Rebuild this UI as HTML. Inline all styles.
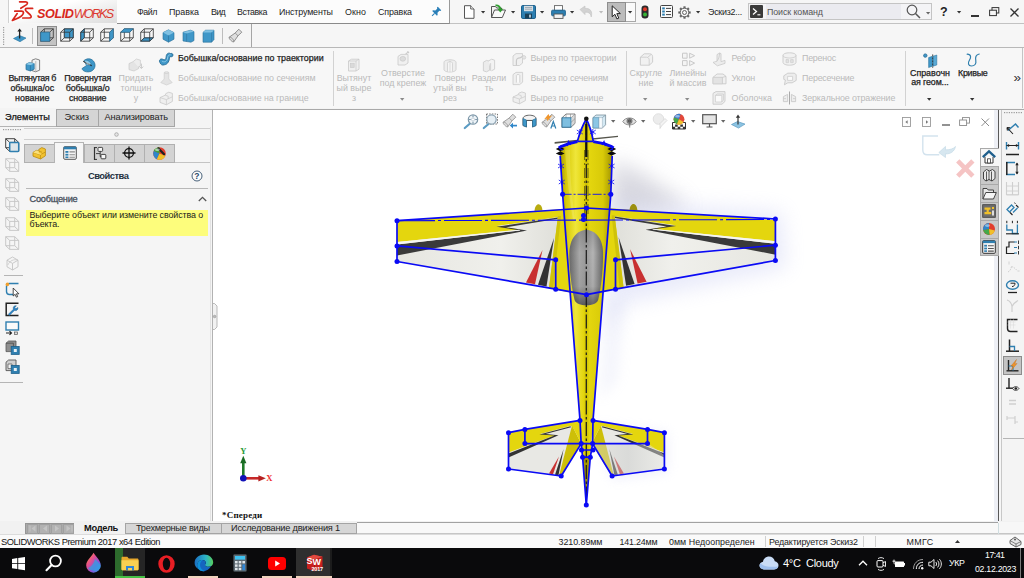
<!DOCTYPE html>
<html lang="ru">
<head>
<meta charset="utf-8">
<title>SOLIDWORKS</title>
<style>
html,body{margin:0;padding:0;}
body{width:1024px;height:578px;overflow:hidden;position:relative;background:#f4f4f4;font-family:"Liberation Sans","DejaVu Sans",sans-serif;font-size:9px;color:#1a1a1a;}
.abs{position:absolute;}
.t{position:absolute;white-space:nowrap;line-height:1;}
.c{position:absolute;text-align:center;line-height:10px;white-space:nowrap;}
.dis{color:#b9b9b9;}
svg{position:absolute;overflow:visible;}
/* title bar */
#titlebar{left:0;top:0;width:1024px;height:24px;background:#f6f6f6;}
#logo{left:8px;top:0;width:108px;height:23px;background:linear-gradient(165deg,#ffffff 35%,#dcdcdc);border-right:1px solid #bdbdbd;border-left:1px solid #d0d0d0;box-sizing:content-box;}
#menubar{left:117px;top:0;width:332px;height:23px;background:#fcfcfc;border-right:1px solid #9a9a9a;border-bottom:1px solid #8a8a8a;}
#row2{left:0;top:24px;width:1024px;height:24px;background:#f6f6f6;}
#tb2{left:0;top:24px;width:251px;height:23px;background:#f5f5f5;border-right:1.3px solid #a6a6a6;border-bottom:1px solid #b4b4b4;}
#cm{left:0;top:47px;width:1024px;height:61px;background:#f7f7f7;border-top:1px solid #b8b8b8;}
.vsep{position:absolute;width:1px;background:#d4d4d4;}
/* tabs */
#tabrow{left:0;top:108px;width:1024px;height:20px;background:#f4f4f4;}
.tab{position:absolute;top:109px;height:17px;line-height:17px;font-size:9.5px;text-align:center;background:#d6d6d6;border:1px solid #ababab;box-sizing:border-box;color:#222;}
/* left panel */
#left{left:0;top:127px;width:213px;height:394px;background:#f5f5f5;}
#leftbar{left:0;top:127px;width:24px;height:394px;background:#f5f5f5;}
#viewport{left:211.5px;top:110px;width:787.5px;height:412px;background:#fff;border-left:1.5px solid #b2b2b2;border-right:1px solid #5a5a5a;box-sizing:border-box;}
#right{left:999px;top:109px;width:25px;height:412px;background:#f3f3f3;}
#btabs{left:0;top:521px;width:1024px;height:13px;background:#f2f2f2;}
#status{left:0;top:534px;width:1024px;height:14px;background:#f4f4f4;border-top:1px solid #dcdcdc;box-sizing:border-box;}
#taskbar{left:0;top:548px;width:1024px;height:30px;background:#0a0a0c;}
</style>
</head>
<body>
<div id="titlebar" class="abs"></div>
<div id="logo" class="abs"></div>
<div id="menubar" class="abs"></div>
<div id="row2" class="abs"></div>
<div id="tb2" class="abs"></div>
<div id="cm" class="abs"></div>
<div id="tabrow" class="abs"></div>
<div id="left" class="abs"></div>
<div id="viewport" class="abs"></div>
<div id="right" class="abs"></div>
<div id="btabs" class="abs"></div>
<div id="status" class="abs"></div>
<div id="taskbar" class="abs"></div>
<svg style="left:0px;top:0px" width="36" height="23" viewBox="0 0 36 23"><g fill="none" stroke="#d8271d" stroke-width="1.7" stroke-linecap="round" stroke-linejoin="round">
<path d="M19.6 1.8 H25.6 C27.8 1.8 27.9 3.4 26.6 4.6 L20.8 8.3"/>
<path d="M14.8 11.2 H21.6 C24 11.2 24 13.2 22.4 15 C20.4 17.4 16.5 19 12.4 20.4 L17.2 13.6"/>
<path d="M32.6 8.4 H27.2 C25 8.4 24.8 9.8 26.2 11.2 L30.4 15 C31.8 16.4 31.4 18 29.2 18 H22.8"/>
</g></svg>
<div class="t " style="left:37px;top:7.04px;font-size:12.6px;line-height:15.12px;color:#d8271d;font-weight:bold;font-style:italic;letter-spacing:-0.400px;">SOLID</div>
<div class="t " style="left:73.8px;top:7.04px;font-size:12.6px;line-height:15.12px;color:#dc3a30;font-style:italic;letter-spacing:-1.820px;">WORKS</div>
<div class="t " style="left:137px;top:6.86px;font-size:8.9px;line-height:10.68px;color:#1d1d1d;letter-spacing:-0.470px;">Файл</div>
<div class="t " style="left:169px;top:6.86px;font-size:8.9px;line-height:10.68px;color:#1d1d1d;letter-spacing:-0.010px;">Правка</div>
<div class="t " style="left:211px;top:6.86px;font-size:8.9px;line-height:10.68px;color:#1d1d1d;letter-spacing:-0.700px;">Вид</div>
<div class="t " style="left:237px;top:6.86px;font-size:8.9px;line-height:10.68px;color:#1d1d1d;letter-spacing:-0.440px;">Вставка</div>
<div class="t " style="left:279px;top:6.86px;font-size:8.9px;line-height:10.68px;color:#1d1d1d;letter-spacing:-0.136px;">Инструменты</div>
<div class="t " style="left:345px;top:6.86px;font-size:8.9px;line-height:10.68px;color:#1d1d1d;letter-spacing:0.080px;">Окно</div>
<div class="t " style="left:378px;top:6.86px;font-size:8.9px;line-height:10.68px;color:#1d1d1d;letter-spacing:-0.130px;">Справка</div>
<svg style="left:430px;top:6px" width="12" height="12" viewBox="0 0 12 12"><g transform="rotate(45 6 6)"><path d="M3.6 1h4.8v1.2l-0.9 0.6v2.6l1.8 1.6v1H2.7v-1l1.8-1.6V2.8l-0.9-0.6z" fill="#2a7fb8"/><path d="M6 8v3.6" stroke="#2a7fb8" stroke-width="1"/></g></svg>
<svg style="left:463px;top:5px" width="13" height="14" viewBox="0 0 13 14"><path d="M1.5 0.7h6.2l3.3 3.3v9.3H1.5z" fill="#fff" stroke="#555" stroke-width="1"/><path d="M7.7 0.7v3.3h3.3" fill="#eee" stroke="#555" stroke-width="0.9"/></svg>
<svg style="left:481.4px;top:10.9px" width="4.2" height="2.6" viewBox="0 0 4.2 2.6"><path d="M0 0h4.200L2.100 2.600z" fill="#333"/></svg>
<svg style="left:490px;top:4px" width="17" height="15" viewBox="0 0 17 15"><path d="M1.5 13.5V2.5h4l1.2 1.5h4.8v2" fill="#f4f4f4" stroke="#555" stroke-width="1"/><path d="M1.5 13.5l3-7.5h11l-3.2 7.5z" fill="#fafafa" stroke="#555" stroke-width="1"/><path d="M5.500 1.400c3.200-0.200 4.800 1.400 4.800 4" fill="none" stroke="#2f9e2f" stroke-width="1.900"/><path d="M7.300 4.800h6l-3 3.800z" fill="#2f9e2f"/></svg>
<svg style="left:510.9px;top:10.9px" width="4.2" height="2.6" viewBox="0 0 4.2 2.6"><path d="M0 0h4.200L2.100 2.600z" fill="#333"/></svg>
<svg style="left:520.5px;top:4.5px" width="15" height="14" viewBox="0 0 15 14"><rect x="0.5" y="0.5" width="14" height="13" rx="1.3" fill="#2d7fb1" stroke="#1d5f8a"/><rect x="3" y="0.8" width="9" height="5.4" fill="#d5dde3"/><path d="M4 2.5h7M4 4.2h7" stroke="#8b99a3" stroke-width="0.7"/><rect x="4" y="8.6" width="7" height="4.9" fill="#1a3f57"/><rect x="8.2" y="9.6" width="1.6" height="3" fill="#cfe3ef"/></svg>
<svg style="left:539.9px;top:10.9px" width="4.2" height="2.6" viewBox="0 0 4.2 2.6"><path d="M0 0h4.200L2.100 2.600z" fill="#333"/></svg>
<svg style="left:550.5px;top:4.5px" width="15" height="14" viewBox="0 0 15 14"><rect x="3.5" y="0.6" width="8" height="5" fill="#fff" stroke="#666" stroke-width="0.9"/><rect x="0.6" y="5.2" width="13.8" height="5.6" rx="1" fill="#2d7fb1" stroke="#1d5f8a" stroke-width="0.9"/><rect x="3" y="9" width="9" height="4.4" fill="#f3f3f3" stroke="#555" stroke-width="0.9"/></svg>
<svg style="left:569.9px;top:10.9px" width="4.2" height="2.6" viewBox="0 0 4.2 2.6"><path d="M0 0h4.200L2.100 2.600z" fill="#333"/></svg>
<svg style="left:579px;top:5px" width="15" height="13" viewBox="0 0 15 13"><path d="M1 4.5L6 1v2.4c5-0.4 8 3 6.2 8.6c-0.4-3.6-2.6-5-6.2-4.8V9.6z" fill="#d2d2d2" stroke="#c2c2c2" stroke-width="0.6"/></svg>
<svg style="left:598.9px;top:10.9px" width="4.2" height="2.6" viewBox="0 0 4.2 2.6"><path d="M0 0h4.200L2.100 2.600z" fill="#bdbdbd"/></svg>
<div class="abs" style="left:606.5px;top:2px;width:19.5px;height:19.5px;background:#bcbcbc;border:1px solid #8e8e8e;box-sizing:border-box;"></div>
<div class="abs" style="left:625.5px;top:2px;width:10px;height:19.5px;background:#fafafa;border:1px solid #a8a8a8;box-sizing:border-box;border-left:none;"></div>
<svg style="left:611px;top:4.5px" width="11" height="15" viewBox="0 0 11 15"><path d="M1.2 0.8v11l2.7-2.5 2 4.6 1.9-0.8-2-4.5h3.6z" fill="#fff" stroke="#222" stroke-width="1" stroke-linejoin="round"/></svg>
<svg style="left:628.4px;top:10.9px" width="4.2" height="2.6" viewBox="0 0 4.2 2.6"><path d="M0 0h4.200L2.100 2.600z" fill="#333"/></svg>
<svg style="left:640.5px;top:4.5px" width="8" height="14" viewBox="0 0 8 14"><rect x="0.5" y="0.5" width="7" height="13" rx="3.2" fill="#2b2b2b"/><circle cx="4" cy="4.2" r="2" fill="#e23a2a"/><circle cx="4" cy="9.6" r="2" fill="#35b335"/></svg>
<svg style="left:659.5px;top:5px" width="13" height="13" viewBox="0 0 13 13"><rect x="0.5" y="0.5" width="12" height="12" rx="1" fill="#fbfbfb" stroke="#444"/><rect x="2.2" y="2.4" width="2.6" height="2" fill="#2d7fb1"/><rect x="2.2" y="5.5" width="2.6" height="2" fill="#2d7fb1"/><rect x="2.2" y="8.6" width="2.6" height="2" fill="#2d7fb1"/><path d="M6 3.4h5M6 6.5h5M6 9.6h5" stroke="#444" stroke-width="1"/></svg>
<svg style="left:677.5px;top:5.5px" width="13" height="13" viewBox="0 0 13 13"><g transform="translate(6.5 6.5)"><g fill="#666"><rect x="-1.1" y="-6.2" width="2.2" height="2.6" transform="rotate(0)"/><rect x="-1.1" y="-6.2" width="2.2" height="2.6" transform="rotate(45)"/><rect x="-1.1" y="-6.2" width="2.2" height="2.6" transform="rotate(90)"/><rect x="-1.1" y="-6.2" width="2.2" height="2.6" transform="rotate(135)"/><rect x="-1.1" y="-6.2" width="2.2" height="2.6" transform="rotate(180)"/><rect x="-1.1" y="-6.2" width="2.2" height="2.6" transform="rotate(225)"/><rect x="-1.1" y="-6.2" width="2.2" height="2.6" transform="rotate(270)"/><rect x="-1.1" y="-6.2" width="2.2" height="2.6" transform="rotate(315)"/></g><circle r="4.3" fill="#f8f8f8" stroke="#555" stroke-width="0.9"/><circle r="2" fill="#f8f8f8" stroke="#555" stroke-width="0.9"/></g></svg>
<svg style="left:695.9px;top:10.9px" width="4.2" height="2.6" viewBox="0 0 4.2 2.6"><path d="M0 0h4.200L2.100 2.600z" fill="#333"/></svg>
<div class="t " style="left:708px;top:6.96px;font-size:8.9px;line-height:10.68px;color:#1d1d1d;letter-spacing:-0.240px;">Эскиз2...</div>
<div class="abs" style="left:748px;top:3px;width:184px;height:17px;background:#f4f4f6;border:1px solid #c4c4c4;box-sizing:border-box;"></div>
<div class="abs" style="left:766px;top:4px;width:135px;height:15px;background:#ebebf0;"></div>
<svg style="left:750px;top:5px" width="13" height="13" viewBox="0 0 13 13"><rect width="13" height="13" rx="1" fill="#3a3a3a"/><path d="M3 3.5l3.5 3L3 9.5" fill="none" stroke="#fff" stroke-width="1.3"/><path d="M7.4 9.8h3" stroke="#fff" stroke-width="1.1"/></svg>
<div class="t " style="left:767px;top:6.96px;font-size:8.9px;line-height:10.68px;color:#555;letter-spacing:-0.104px;">Поиск команд</div>
<svg style="left:906px;top:4px" width="16" height="15" viewBox="0 0 16 15"><circle cx="6" cy="6" r="4.8" fill="none" stroke="#555" stroke-width="1.2"/><path d="M9.5 9.5l4.5 4.5" stroke="#555" stroke-width="1.5"/></svg>
<svg style="left:925.9px;top:11.9px" width="4.2" height="2.6" viewBox="0 0 4.2 2.6"><path d="M0 0h4.200L2.100 2.600z" fill="#666"/></svg>
<div class="t " style="left:940px;top:4.90px;font-size:12.5px;line-height:15.00px;color:#222;font-weight:bold;">?</div>
<svg style="left:957.4px;top:10.9px" width="4.2" height="2.6" viewBox="0 0 4.2 2.6"><path d="M0 0h4.200L2.100 2.600z" fill="#333"/></svg>
<div class="abs" style="left:971px;top:15px;width:8px;height:2px;background:#333;"></div>
<svg style="left:989px;top:7px" width="11" height="10" viewBox="0 0 11 10"><rect x="3" y="0.6" width="6.8" height="5.4" fill="none" stroke="#333" stroke-width="1"/><rect x="0.6" y="3.2" width="6.800" height="5.400" fill="#f6f6f6" stroke="#333" stroke-width="1"/></svg>
<svg style="left:1009.5px;top:7.5px" width="9" height="9" viewBox="0 0 9 9"><path d="M0.5 0.5l8 8M8.5 0.5l-8 8" stroke="#333" stroke-width="1.3"/></svg>
<div class="abs" style="left:450px;top:23px;width:574px;height:1px;background:#c2c2c2;"></div>

<svg style="left:3px;top:27px" width="2" height="19" viewBox="0 0 2 19"><rect x="0" y="0.0" width="1.2" height="1.2" fill="#9a9a9a"/><rect x="0" y="2.4" width="1.2" height="1.2" fill="#9a9a9a"/><rect x="0" y="4.8" width="1.2" height="1.2" fill="#9a9a9a"/><rect x="0" y="7.2" width="1.2" height="1.2" fill="#9a9a9a"/><rect x="0" y="9.6" width="1.2" height="1.2" fill="#9a9a9a"/><rect x="0" y="12.0" width="1.2" height="1.2" fill="#9a9a9a"/><rect x="0" y="14.4" width="1.2" height="1.2" fill="#9a9a9a"/><rect x="0" y="16.8" width="1.2" height="1.2" fill="#9a9a9a"/></svg>
<svg style="left:13px;top:28px" width="15" height="15" viewBox="0 0 15 15"><path d="M0.5 10.5L6.5 7.5l6.5 2.6-6 3.6z" fill="#3f95c6" stroke="#2773a0" stroke-width="0.6"/><path d="M6.6 10.5V2" stroke="#222" stroke-width="1.3"/><path d="M4.3 3.6L6.6 0.6l2.3 3z" fill="#222"/></svg>
<div class="abs" style="left:32px;top:28px;width:1px;height:16px;background:#bdbdbd;"></div>
<div class="abs" style="left:36.5px;top:25.5px;width:20px;height:20px;background:#c3c3c3;border:1px solid #8c8c8c;box-sizing:border-box;"></div>
<svg style="left:40px;top:28px" width="14" height="14" viewBox="0 0 14 14"><path d="M0.7 4.2h9v9h-9z M4.3 0.8000000000000003h9v9h-9z M0.7 4.2l3.6 -3.4 M9.7 4.2l3.6 -3.4 M0.7 13.2l3.6 -3.4 M9.7 13.2l3.6 -3.4" fill="none" stroke="#333" stroke-width="0.8"/><path d="M0.7 4.2h9v9h-9z" fill="#3f97c8" stroke="#2a6f98" stroke-width="0.6"/></svg>
<svg style="left:60px;top:28px" width="14" height="14" viewBox="0 0 14 14"><path d="M4.3 0.8000000000000003h9v9h-9z" fill="#3f97c8" stroke="#2a6f98" stroke-width="0.6"/><path d="M0.7 4.2h9v9h-9z M4.3 0.8000000000000003h9v9h-9z M0.7 4.2l3.6 -3.4 M9.7 4.2l3.6 -3.4 M0.7 13.2l3.6 -3.4 M9.7 13.2l3.6 -3.4" fill="none" stroke="#333" stroke-width="0.8"/></svg>
<svg style="left:80px;top:28px" width="14" height="14" viewBox="0 0 14 14"><path d="M0.7 4.2l3.6 -3.4v9l-3.6 3.4z" fill="#3f97c8" stroke="#2a6f98" stroke-width="0.6"/><path d="M0.7 4.2h9v9h-9z M4.3 0.8000000000000003h9v9h-9z M0.7 4.2l3.6 -3.4 M9.7 4.2l3.6 -3.4 M0.7 13.2l3.6 -3.4 M9.7 13.2l3.6 -3.4" fill="none" stroke="#333" stroke-width="0.8"/></svg>
<svg style="left:100px;top:28px" width="14" height="14" viewBox="0 0 14 14"><path d="M0.7 4.2h9v9h-9z M4.3 0.8000000000000003h9v9h-9z M0.7 4.2l3.6 -3.4 M9.7 4.2l3.6 -3.4 M0.7 13.2l3.6 -3.4 M9.7 13.2l3.6 -3.4" fill="none" stroke="#333" stroke-width="0.8"/><path d="M9.7 4.2l3.6 -3.4v9l-3.6 3.4z" fill="#3f97c8" stroke="#2a6f98" stroke-width="0.6"/></svg>
<svg style="left:120px;top:28px" width="14" height="14" viewBox="0 0 14 14"><path d="M0.7 4.2h9v9h-9z M4.3 0.8000000000000003h9v9h-9z M0.7 4.2l3.6 -3.4 M9.7 4.2l3.6 -3.4 M0.7 13.2l3.6 -3.4 M9.7 13.2l3.6 -3.4" fill="none" stroke="#333" stroke-width="0.8"/><path d="M0.7 4.2l3.6 -3.4h9l-3.6 3.4z" fill="#3f97c8" stroke="#2a6f98" stroke-width="0.6"/></svg>
<svg style="left:140px;top:28px" width="14" height="14" viewBox="0 0 14 14"><path d="M0.7 13.2l3.6 -3.4h9l-3.6 3.4z" fill="#3f97c8" stroke="#2a6f98" stroke-width="0.6"/><path d="M0.7 4.2h9v9h-9z M4.3 0.8000000000000003h9v9h-9z M0.7 4.2l3.6 -3.4 M9.7 4.2l3.6 -3.4 M0.7 13.2l3.6 -3.4 M9.7 13.2l3.6 -3.4" fill="none" stroke="#333" stroke-width="0.8"/></svg>
<svg style="left:161.5px;top:28.5px" width="13" height="14" viewBox="0 0 13 14"><path d="M6.5 0.8L12 3.6v6.6L6.5 13.2 1 10.2V3.6z" fill="#3f97c8" stroke="#2a6f98" stroke-width="0.6"/><path d="M6.5 0.8L12 3.6 6.5 6.4 1 3.6z" fill="#7fc0e2"/><path d="M6.5 6.4v6.8" stroke="#2a6f98" stroke-width="0.6"/></svg>
<svg style="left:181.5px;top:28.5px" width="13" height="14" viewBox="0 0 13 14"><path d="M1 3.2L8.5 1.2 12 2.6v9L9 13.2 1 12z" fill="#3f97c8" stroke="#2a6f98" stroke-width="0.6"/><path d="M1 3.2L8.5 1.2 12 2.6 4.6 4.6z" fill="#7fc0e2"/><path d="M4.6 4.6v8" stroke="#2a6f98" stroke-width="0.5"/></svg>
<svg style="left:201.5px;top:28.5px" width="13" height="14" viewBox="0 0 13 14"><path d="M1 3.4L3.6 1.2H12v9.4L9.6 13.2H1z" fill="#3f97c8" stroke="#2a6f98" stroke-width="0.6"/><path d="M1 3.4L3.6 1.2H12L9.6 3.4z" fill="#7fc0e2"/><path d="M9.6 3.4v9.8" stroke="#2a6f98" stroke-width="0.5"/></svg>
<div class="abs" style="left:221.5px;top:28px;width:1px;height:16px;background:#bdbdbd;"></div>
<svg style="left:228px;top:28px" width="15" height="15" viewBox="0 0 15 15"><path d="M1.200 9.200L7.200 5 10.800 1.200 13.800 4.200 10 7.800 5.800 13.800C4.800 14.800 0.200 10.200 1.200 9.200z" fill="#dedede" stroke="#777" stroke-width="0.800" stroke-linejoin="round"/><path d="M7.200 5l2.800 2.800M1.200 9.200c1.800-0.600 5 2.600 4.600 4.600" fill="none" stroke="#777" stroke-width="0.700"/></svg>

<div class="t " style="left:8.55px;top:73.36px;font-size:8.9px;line-height:10.68px;color:#222;letter-spacing:-0.401px;-webkit-text-stroke:0.25px #222;">Вытянутая б</div>
<div class="t " style="left:10.45px;top:83.06px;font-size:8.9px;line-height:10.68px;color:#222;letter-spacing:-0.088px;-webkit-text-stroke:0.25px #222;">обышка/ос</div>
<div class="t " style="left:15.05px;top:92.76px;font-size:8.9px;line-height:10.68px;color:#222;letter-spacing:0.032px;-webkit-text-stroke:0.25px #222;">нование</div>
<div class="t " style="left:64.2px;top:73.36px;font-size:8.9px;line-height:10.68px;color:#222;letter-spacing:-0.198px;-webkit-text-stroke:0.25px #222;">Повернутая</div>
<div class="t " style="left:65.7px;top:83.06px;font-size:8.9px;line-height:10.68px;color:#222;letter-spacing:-0.127px;-webkit-text-stroke:0.25px #222;">бобышка/о</div>
<div class="t " style="left:69.05px;top:92.76px;font-size:8.9px;line-height:10.68px;color:#222;letter-spacing:-0.178px;-webkit-text-stroke:0.25px #222;">снование</div>
<div class="t " style="left:118.51px;top:73.36px;font-size:8.9px;line-height:10.68px;color:#bababa;letter-spacing:0.000px;">Придать</div>
<div class="t " style="left:120.43px;top:83.06px;font-size:8.9px;line-height:10.68px;color:#bababa;letter-spacing:0.000px;">толщин</div>
<div class="t " style="left:133.78px;top:92.76px;font-size:8.9px;line-height:10.68px;color:#bababa;letter-spacing:0.000px;">у</div>
<svg style="left:24.5px;top:57.5px" width="16" height="15" viewBox="0 0 16 15"><path d="M7 2.2l3.6-1.4 4 1.2v10.2l-4 1.6L7 12.6z" fill="#f2f2f2" stroke="#666" stroke-width="0.8"/><path d="M10.8 3v10.6" stroke="#999" stroke-width="0.6"/><path d="M1 6.2l3.2-1.6 5 1v5.6L5.4 13 1 11.6z" fill="#3f97c8" stroke="#236a94" stroke-width="0.7"/><path d="M1 6.2l3.2-1.6 5 1L5.4 7.2z" fill="#8cc8e6"/><path d="M5.4 7.2V13" stroke="#236a94" stroke-width="0.6"/></svg>
<svg style="left:80.5px;top:57.5px" width="15" height="15" viewBox="0 0 15 15"><path d="M3.2 2.4C6.6-0.6 13 0.6 14 6.4 14.6 11 10.6 14.6 5.4 13.8 2.8 13.4 1.2 12 1 10.6l4.6-3.2z" fill="#3f97c8" stroke="#236a94" stroke-width="0.7"/><path d="M3.2 2.4C6 1.6 9.4 3.2 10.4 6.6L5.6 7.4z" fill="#8cc8e6" stroke="#236a94" stroke-width="0.5"/><path d="M2.2 3.4l8.6 4.4" stroke="#222" stroke-width="1"/><path d="M4.4 4.2l4.4 2.6" stroke="#fff" stroke-width="0.6"/></svg>
<svg style="left:127.5px;top:57.5px" width="16" height="15" viewBox="0 0 16 15"><path d="M1 5.6l4.6-2.2 5 1.2v6L6 13 1 11.6z" fill="#e4e4e4" stroke="#c9c9c9" stroke-width="0.7"/><path d="M5.4 3.4L8.4 1l4 1.2V8l-2 1" fill="#ededed" stroke="#c9c9c9" stroke-width="0.7"/><path d="M13.4 5.6v4.4M11.6 8.6l1.8 2 1.8-2" fill="none" stroke="#c9c9c9" stroke-width="1"/></svg>
<svg style="left:157.5px;top:51.5px" width="16" height="15" viewBox="0 0 16 15"><path d="M2 10.6C0.4 8.4 2.6 6 5 7.4 7.6 8.8 8 6.4 8.2 4.4 8.4 1.6 10.6 0.4 12.6 1.6 14.4 0.8 15.6 2.6 14.6 4.2 13.2 5.4 11.8 4 11.6 5.2 11.4 8.6 9.8 12.6 6.2 12.8 4.4 13.6 2.6 12.6 2 10.6z" fill="#3f97c8" stroke="#236a94" stroke-width="0.9"/><path d="M4 9.2C6 10.4 9 10 9.6 6 9.8 3.8 10.8 2.6 12.6 2.8" fill="none" stroke="#8cc8e6" stroke-width="1"/></svg>
<div class="t " style="left:178px;top:53.46px;font-size:8.9px;line-height:10.68px;color:#222;letter-spacing:-0.002px;-webkit-text-stroke:0.25px #222;">Бобышка/основание по траектории</div>
<svg style="left:159.5px;top:71px" width="13" height="15" viewBox="0 0 13 15"><path d="M4.2 1.6C4.2 0.4 8.8 0.4 8.8 1.6V8l3.4 3.6L6.6 14 0.8 11.6 4.2 8z" fill="#e4e4e4" stroke="#c9c9c9" stroke-width="0.6"/><path d="M4.2 1.6c0 1.2 4.6 1.2 4.600 0" fill="none" stroke="#c9c9c9" stroke-width="0.6"/></svg>
<div class="t " style="left:178px;top:73.06px;font-size:8.9px;line-height:10.68px;color:#bababa;letter-spacing:-0.029px;">Бобышка/основание по сечениям</div>
<svg style="left:158.5px;top:90.5px" width="15" height="15" viewBox="0 0 15 15"><path d="M1 6.6l5.2-2.4 0.6-1.6 3-1.4 3.6 1.2v8L7.4 13.8 1 11.4z" fill="#efefef" stroke="#c9c9c9" stroke-width="0.8"/><path d="M1 6.600l6.400 2v5.200M7.400 8.600l6-2.800M6.200 4.200l3 1v2.600" fill="none" stroke="#c9c9c9" stroke-width="0.7"/></svg>
<div class="t " style="left:178px;top:92.66px;font-size:8.9px;line-height:10.68px;color:#bababa;letter-spacing:-0.050px;">Бобышка/основание на границе</div>
<div class="abs" style="left:332.5px;top:51px;width:1px;height:55px;background:#d2d2d2;"></div>
<div class="t " style="left:336.67px;top:72.86px;font-size:8.9px;line-height:10.68px;color:#bababa;letter-spacing:0.000px;">Вытянут</div>
<div class="t " style="left:336.57px;top:82.66px;font-size:8.9px;line-height:10.68px;color:#bababa;letter-spacing:0.000px;">ый выре</div>
<div class="t " style="left:351.96px;top:92.66px;font-size:8.9px;line-height:10.68px;color:#bababa;letter-spacing:0.000px;">з</div>
<div class="t " style="left:381.01px;top:67.86px;font-size:8.9px;line-height:10.68px;color:#bababa;letter-spacing:0.000px;">Отверстие</div>
<div class="t " style="left:379.67px;top:77.66px;font-size:8.9px;line-height:10.68px;color:#bababa;letter-spacing:0.000px;">под крепеж</div>
<svg style="left:400.3px;top:98.2px" width="4.4" height="2.7" viewBox="0 0 4.4 2.7"><path d="M0 0h4.400L2.200 2.700z" fill="#8a8a8a"/></svg>
<div class="t " style="left:434.61px;top:72.86px;font-size:8.9px;line-height:10.68px;color:#bababa;letter-spacing:0.000px;">Поверн</div>
<div class="t " style="left:433.25px;top:82.66px;font-size:8.9px;line-height:10.68px;color:#bababa;letter-spacing:0.000px;">утый вы</div>
<div class="t " style="left:443.11px;top:92.66px;font-size:8.9px;line-height:10.68px;color:#bababa;letter-spacing:0.000px;">рез</div>
<div class="t " style="left:471.81px;top:72.86px;font-size:8.9px;line-height:10.68px;color:#bababa;letter-spacing:0.000px;">Раздели</div>
<div class="t " style="left:484.64px;top:82.66px;font-size:8.9px;line-height:10.68px;color:#bababa;letter-spacing:0.000px;">ть</div>
<svg style="left:347px;top:58px" width="14" height="15" viewBox="0 0 14 15"><path d="M1.500 3l3-1.800h7.500v10l-3 1.800H1.500z" fill="#f0f0f0" stroke="#c9c9c9" stroke-width="0.8"/><path d="M1.500 3h7.500v10M9 3l3-1.800" fill="none" stroke="#c9c9c9" stroke-width="0.7"/><rect x="3.4" y="5.200" width="3.800" height="4.400" fill="#dadada" stroke="#c9c9c9" stroke-width="0.6"/></svg>
<svg style="left:396px;top:50.5px" width="14" height="15" viewBox="0 0 14 15"><path d="M2 5.400l3-2h7v8.600l-3 2H2z" fill="#f0f0f0" stroke="#c9c9c9" stroke-width="0.8"/><ellipse cx="6.800" cy="7.800" rx="2.800" ry="2.400" fill="#dcdcdc" stroke="#c9c9c9" stroke-width="0.7"/><path d="M9.600 3.200l3-2.600M11.400 0.400l1.600 1.600" stroke="#c9c9c9" stroke-width="1.100"/></svg>
<svg style="left:443px;top:58px" width="14" height="15" viewBox="0 0 14 15"><path d="M1 4.200c0-1.400 2.800-2.400 6-2.400s6 1 6 2.400v7.400c0 1.400-2.800 2.400-6 2.400s-6-1-6-2.400z" fill="#eeeeee" stroke="#c9c9c9" stroke-width="0.8"/><path d="M4.600 13.600V5.400c0-2.400 4.800-2.400 4.800 0v8.200" fill="#fafafa" stroke="#c9c9c9" stroke-width="0.800"/><path d="M7 3.400v10.400" stroke="#c9c9c9" stroke-width="0.7"/></svg>
<svg style="left:482px;top:58px" width="14" height="15" viewBox="0 0 14 15"><path d="M1.400 4.200l3.200-1.800 3 1v8.800l-3.200 1.600-3-1z" fill="#ececec" stroke="#c9c9c9" stroke-width="0.800"/><path d="M6.400 3l3.200-1.800 3 1v9l-3.200 1.600" fill="#f3f3f3" stroke="#c9c9c9" stroke-width="0.800"/><path d="M8.600 5.200v7.600" stroke="#c9c9c9" stroke-width="0.800"/></svg>
<svg style="left:511.5px;top:51.5px" width="15" height="15" viewBox="0 0 15 15"><path d="M1 4l3-2.400h6.500v9.500l-3 2.400H1z" fill="#f0f0f0" stroke="#c9c9c9" stroke-width="0.800"/><path d="M4.400 13.400V9c0-2 1.400-3.200 3.400-3.200 1.600 0 2-1.800 3.800-1.600" fill="none" stroke="#c9c9c9" stroke-width="1.200"/><circle cx="12" cy="5.400" r="1.800" fill="#e4e4e4" stroke="#c9c9c9" stroke-width="0.600"/></svg>
<div class="t " style="left:530.5px;top:53.46px;font-size:8.9px;line-height:10.68px;color:#bababa;letter-spacing:-0.082px;">Вырез по траектории</div>
<svg style="left:512px;top:71px" width="14" height="15" viewBox="0 0 14 15"><path d="M1 3.600l3-2.200h6.600v9.800l-3 2.400H1z" fill="#f0f0f0" stroke="#c9c9c9" stroke-width="0.800"/><path d="M4.400 11.600V4.400c0-1.200 3.400-1.200 3.400 0v7.200" fill="#fafafa" stroke="#c9c9c9" stroke-width="0.800"/></svg>
<div class="t " style="left:530.5px;top:73.06px;font-size:8.9px;line-height:10.68px;color:#bababa;letter-spacing:-0.138px;">Вырез по сечениям</div>
<svg style="left:511.5px;top:91px" width="15" height="14" viewBox="0 0 15 14"><path d="M1 6l5.200-2.400 0.600-1.400 3-1.200 3.600 1v7.600L7.400 12.800 1 10.600z" fill="#efefef" stroke="#c9c9c9" stroke-width="0.800"/><path d="M1 6l6.400 2v4.800M7.400 8l6-2.600M6.200 3.600l3 1v2.400" fill="none" stroke="#c9c9c9" stroke-width="0.700"/></svg>
<div class="t " style="left:530.5px;top:92.66px;font-size:8.9px;line-height:10.68px;color:#bababa;letter-spacing:-0.050px;">Вырез по границе</div>
<div class="abs" style="left:625.5px;top:51px;width:1px;height:55px;background:#d2d2d2;"></div>
<div class="t " style="left:629.59px;top:67.96px;font-size:8.9px;line-height:10.68px;color:#bababa;letter-spacing:0.000px;">Скругле</div>
<div class="t " style="left:638.58px;top:77.66px;font-size:8.9px;line-height:10.68px;color:#bababa;letter-spacing:0.000px;">ние</div>
<svg style="left:643.3px;top:98.2px" width="4.4" height="2.7" viewBox="0 0 4.4 2.7"><path d="M0 0h4.400L2.200 2.700z" fill="#8a8a8a"/></svg>
<div class="t " style="left:669.52px;top:67.96px;font-size:8.9px;line-height:10.68px;color:#bababa;letter-spacing:0.000px;">Линейны</div>
<div class="t " style="left:669.44px;top:77.66px;font-size:8.9px;line-height:10.68px;color:#bababa;letter-spacing:0.000px;">й массив</div>
<svg style="left:685.3px;top:98.2px" width="4.4" height="2.7" viewBox="0 0 4.4 2.7"><path d="M0 0h4.400L2.200 2.700z" fill="#8a8a8a"/></svg>
<svg style="left:639px;top:51.5px" width="15" height="15" viewBox="0 0 15 15"><path d="M1.400 5.200l3.800-3.400h5.400c1.800 0 3 1.200 3 2.800v5.600l-3.400 3H1.400z" fill="#f1f1f1" stroke="#c9c9c9" stroke-width="0.900"/><path d="M1.400 5.200h6c1.600 0 2.800 1.200 2.800 2.600v5.400M8.600 5.400l3.600-3" fill="none" stroke="#c9c9c9" stroke-width="0.800"/></svg>
<svg style="left:680.5px;top:51.5px" width="15" height="15" viewBox="0 0 15 15"><g fill="#f4f4f4" stroke="#c9c9c9" stroke-width="1"><path d="M1.500 1.200h4.600v5H1.500zM8.600 1.200l5 2.500-5 2.500zM1.500 8.600h4.600v5H1.500zM8.600 8.600l5 2.500-5 2.500z"/></g></svg>
<svg style="left:712px;top:51.5px" width="14" height="15" viewBox="0 0 14 15"><path d="M1 10.400l4-1.200V2.600l2.600-1.600 1.400 0.600v8l4-1.200v3l-7.600 2.400z" fill="#ececec" stroke="#c9c9c9" stroke-width="0.800"/><path d="M5 9.200c2-3 2.400-5 2.600-8.200" fill="none" stroke="#c9c9c9" stroke-width="0.800"/></svg>
<div class="t " style="left:731.5px;top:53.46px;font-size:8.9px;line-height:10.68px;color:#bababa;letter-spacing:-0.278px;">Ребро</div>
<svg style="left:711.5px;top:71.5px" width="15" height="14" viewBox="0 0 15 14"><path d="M1 5.400l4-3.400h6l3 2.400v7.400H1z" fill="#f0f0f0" stroke="#c9c9c9" stroke-width="0.900"/><path d="M1 5.400h9.400l3.600-1M10.400 5.400v6.400" fill="none" stroke="#c9c9c9" stroke-width="0.800"/><path d="M1 5.400l9.400 0 0 6.400-9.400 0z" fill="#e3e3e3" stroke="#c9c9c9" stroke-width="0.600"/></svg>
<div class="t " style="left:731.5px;top:73.06px;font-size:8.9px;line-height:10.68px;color:#bababa;letter-spacing:-0.181px;">Уклон</div>
<svg style="left:711.5px;top:91px" width="15" height="14" viewBox="0 0 15 14"><path d="M1 2.400l3-1.800h9v9.800l-3 2.800H1z" fill="#eeeeee" stroke="#c9c9c9" stroke-width="0.900"/><path d="M3.400 4.400h6.400v6.600H3.400z" fill="#fafafa" stroke="#c9c9c9" stroke-width="0.700"/><path d="M3.400 4.400l2-1.400h6v6l-1.600 2" fill="none" stroke="#c9c9c9" stroke-width="0.700"/></svg>
<div class="t " style="left:731.5px;top:92.66px;font-size:8.9px;line-height:10.68px;color:#bababa;letter-spacing:0.001px;">Оболочка</div>
<svg style="left:782px;top:51.5px" width="15" height="14" viewBox="0 0 15 14"><path d="M1 3.400c0-1.600 3-2.600 6.500-2.600s6.500 1 6.500 2.600v7c0 1.600-3 2.800-6.500 2.800S1 12 1 10.400z" fill="#f1f1f1" stroke="#c9c9c9" stroke-width="0.900"/><path d="M1 3.400c0 1.600 3 2.600 6.500 2.600s6.500-1 6.500-2.600" fill="none" stroke="#c9c9c9" stroke-width="0.800"/><path d="M4 7.600h2.600v3H4zM8.600 7.600h2.600v3H8.600z" fill="#e2e2e2" stroke="#c9c9c9" stroke-width="0.600"/></svg>
<div class="t " style="left:802px;top:53.46px;font-size:8.9px;line-height:10.68px;color:#bababa;letter-spacing:-0.223px;">Перенос</div>
<svg style="left:782px;top:71px" width="15" height="15" viewBox="0 0 15 15"><path d="M2.400 13.800l1-4.800-1.600-0.600V4.800l4-2.600h6.400l2 1.400v5.800l-4 2.400H5.800z" fill="#ededed" stroke="#c9c9c9" stroke-width="0.900"/><path d="M5.600 5.400h5v4h-5z" fill="#fbfbfb" stroke="#c9c9c9" stroke-width="0.700"/></svg>
<div class="t " style="left:802px;top:73.06px;font-size:8.9px;line-height:10.68px;color:#bababa;letter-spacing:-0.206px;">Пересечение</div>
<svg style="left:782px;top:91px" width="15" height="14" viewBox="0 0 15 14"><path d="M7.500 0.500v13" stroke="#a9a9a9" stroke-width="1"/><path d="M5.600 3.400v7.200H1.400V5.600zM9.400 3.400v7.200h4.200V5.600z" fill="#ededed" stroke="#c9c9c9" stroke-width="0.900"/><path d="M1.400 7.600h2.600M11 7.600h2.600" stroke="#c9c9c9" stroke-width="0.8"/></svg>
<div class="t " style="left:802px;top:92.66px;font-size:8.9px;line-height:10.68px;color:#bababa;letter-spacing:-0.120px;">Зеркальное отражение</div>
<div class="abs" style="left:904.5px;top:51px;width:1px;height:55px;background:#d2d2d2;"></div>
<div class="t " style="left:910.0px;top:67.66px;font-size:8.9px;line-height:10.68px;color:#222;letter-spacing:-0.010px;-webkit-text-stroke:0.25px #222;">Справочн</div>
<div class="t " style="left:911.25px;top:77.46px;font-size:8.9px;line-height:10.68px;color:#222;letter-spacing:-0.123px;-webkit-text-stroke:0.25px #222;">ая геом...</div>
<svg style="left:927.3px;top:98.2px" width="4.4" height="2.7" viewBox="0 0 4.4 2.7"><path d="M0 0h4.400L2.200 2.700z" fill="#333"/></svg>
<div class="t " style="left:958.05px;top:67.66px;font-size:8.9px;line-height:10.68px;color:#222;letter-spacing:-0.280px;-webkit-text-stroke:0.25px #222;">Кривые</div>
<svg style="left:970.3px;top:98.2px" width="4.4" height="2.7" viewBox="0 0 4.4 2.7"><path d="M0 0h4.400L2.200 2.700z" fill="#333"/></svg>
<svg style="left:922.5px;top:52.5px" width="15" height="15" viewBox="0 0 15 15"><circle cx="2.300" cy="2.600" r="1.700" fill="#3f97c8" stroke="#236a94" stroke-width="0.800"/><path d="M5.600 4.600l3.800-1.400v10l-3.800 1.400z" fill="#3f97c8" stroke="#236a94" stroke-width="0.500"/><path d="M10 3.200l3.800-1.200v10L10 13.200z" fill="#5aaad6" stroke="#236a94" stroke-width="0.500"/><path d="M9.700 1.400v13.400" stroke="#222" stroke-width="0.800" stroke-dasharray="2 1"/></svg>
<svg style="left:964.5px;top:52.5px" width="16" height="15" viewBox="0 0 16 15"><path d="M2.200 1.200C6.400 1.600 6.200 4.400 4.400 7.200 2.600 10 3.200 13 6.400 13c3.400 0 5-2.200 4.400-5.400C10.200 4.400 10.800 1.600 14.200 1" fill="none" stroke="#2f7fad" stroke-width="1.200" stroke-linecap="round"/></svg>
<div class="t " style="left:1013.5px;top:69.50px;font-size:13.5px;line-height:16.20px;color:#333;">»</div>
<div class="abs" style="left:1022px;top:48px;width:1px;height:60px;background:#c4c4c4;"></div>

<div class="abs" style="left:175px;top:109px;width:849px;height:1px;background:#a9a9a9;"></div>
<div class="abs" style="left:0px;top:126px;width:175px;height:1px;background:#b4b4b4;"></div>
<div class="t " style="left:5px;top:112.08px;font-size:9.2px;line-height:11.04px;color:#111;letter-spacing:0.108px;-webkit-text-stroke:0.25px #111;">Элементы</div>
<div class="abs" style="left:55.5px;top:109px;width:43px;height:17.5px;background:#d5d5d5;border:1px solid #a6a6a6;box-sizing:border-box;"></div>
<div class="t " style="left:64.5px;top:112.08px;font-size:9.2px;line-height:11.04px;color:#222;letter-spacing:-0.019px;">Эскиз</div>
<div class="abs" style="left:98px;top:109px;width:76.5px;height:17.5px;background:#d5d5d5;border:1px solid #a6a6a6;box-sizing:border-box;"></div>
<div class="t " style="left:104.5px;top:112.08px;font-size:9.2px;line-height:11.04px;color:#222;letter-spacing:-0.126px;">Анализировать</div>

<svg style="left:3px;top:128.5px" width="20" height="2" viewBox="0 0 20 2"><rect x="0.0" y="0" width="1.2" height="1.2" fill="#9a9a9a"/><rect x="2.4" y="0" width="1.2" height="1.2" fill="#9a9a9a"/><rect x="4.8" y="0" width="1.2" height="1.2" fill="#9a9a9a"/><rect x="7.2" y="0" width="1.2" height="1.2" fill="#9a9a9a"/><rect x="9.6" y="0" width="1.2" height="1.2" fill="#9a9a9a"/><rect x="12.0" y="0" width="1.2" height="1.2" fill="#9a9a9a"/><rect x="14.4" y="0" width="1.2" height="1.2" fill="#9a9a9a"/><rect x="16.8" y="0" width="1.2" height="1.2" fill="#9a9a9a"/></svg>
<div class="abs" style="left:24px;top:128px;width:187px;height:1px;background:#cfcfcf;"></div>
<div class="abs" style="left:24px;top:139px;width:187px;height:1px;background:#cfcfcf;"></div>
<svg style="left:114px;top:131.5px" width="5" height="5" viewBox="0 0 5 5"><circle cx="2.5" cy="2.5" r="1.8" fill="#e4e4e4" stroke="#9b9b9b" stroke-width="0.7"/></svg>
<div class="abs" style="left:24px;top:162px;width:187px;height:1px;background:#c4c4c4;"></div>
<div class="abs" style="left:24px;top:143.5px;width:30.5px;height:19px;background:#d3d3d3;border:1px solid #b0b0b0;box-sizing:border-box;"></div>
<div class="abs" style="left:54px;top:142px;width:30px;height:21px;background:#f6f6f6;border:1px solid #b4b4b4;box-sizing:border-box;border-bottom:none;"></div>
<div class="abs" style="left:84px;top:143.5px;width:30.5px;height:19px;background:#d3d3d3;border:1px solid #b0b0b0;box-sizing:border-box;"></div>
<div class="abs" style="left:114px;top:143.5px;width:30.5px;height:19px;background:#d3d3d3;border:1px solid #b0b0b0;box-sizing:border-box;"></div>
<div class="abs" style="left:144px;top:143.5px;width:30.5px;height:19px;background:#d3d3d3;border:1px solid #b0b0b0;box-sizing:border-box;"></div>
<svg style="left:32px;top:146px" width="15" height="14" viewBox="0 0 15 14"><path d="M1 6.400l3.400-2 2.400 0.800V3.400l3-1.800 3.600 1.400v6.800L8.600 13 1 10.200z" fill="#f2c230" stroke="#b98a10" stroke-width="0.800"/><path d="M1 6.400l7.400 2.400 5-2.800M8.400 8.800V13M6.800 5.200l3.200 1" fill="none" stroke="#b98a10" stroke-width="0.700"/><path d="M4.400 4.400l2.400 0.800v1.800L9.900 8 8.400 8.800 1 6.400z" fill="#fbe07a"/></svg>
<svg style="left:62.5px;top:146px" width="14" height="14" viewBox="0 0 14 14"><rect x="0.700" y="0.700" width="12.600" height="12.600" rx="1.200" fill="#f4f4f4" stroke="#555" stroke-width="1"/><rect x="0.700" y="0.700" width="12.600" height="2.600" fill="#2f7fb0"/><rect x="2.400" y="5" width="3" height="1.800" fill="#2f7fb0"/><rect x="2.400" y="7.800" width="3" height="1.800" fill="#2f7fb0"/><rect x="2.400" y="10.500" width="3" height="1.600" fill="#2f7fb0"/><path d="M6.500 5.900h5.400M6.500 8.700h5.400M6.500 11.300h5.400" stroke="#8c8c8c" stroke-width="1.100"/></svg>
<svg style="left:92.5px;top:145.5px" width="14" height="15" viewBox="0 0 14 15"><path d="M1.500 1v13" stroke="#333" stroke-width="1.200"/><path d="M1.500 1.600h2.500M1.500 13.400h2.500" stroke="#333" stroke-width="1"/><rect x="5" y="1.400" width="4.600" height="4" rx="0.800" fill="#f7f7f7" stroke="#333" stroke-width="0.900"/><rect x="8" y="8.400" width="4.800" height="4.400" rx="0.800" fill="#f7f7f7" stroke="#333" stroke-width="0.900"/><path d="M7.200 5.400v5.200h0.800M3 7.600h4.200" fill="none" stroke="#333" stroke-width="0.900"/></svg>
<svg style="left:122px;top:146px" width="14" height="14" viewBox="0 0 14 14"><circle cx="7" cy="7" r="4.400" fill="none" stroke="#111" stroke-width="1.300"/><path d="M7 0.500v13M0.500 7h13" stroke="#111" stroke-width="1.300"/></svg>
<svg style="left:151.5px;top:145.5px" width="15" height="15" viewBox="0 0 15 15"><circle cx="7.500" cy="7.500" r="6.300" fill="#e33d2c"/><path d="M7.500 7.500L1.800 4.800A6.300 6.300 0 0 0 4.800 13.200z" fill="#2f86c9"/><path d="M7.500 7.500L4.800 13.200A6.300 6.300 0 0 0 13.400 9.800z" fill="#f0c02a"/><path d="M7.500 7.500L1.800 4.800A6.300 6.300 0 0 1 7.500 1.200z" fill="#3aa640"/><path d="M6.500 2.400l5.600 5.800" stroke="#222" stroke-width="2.200" stroke-linecap="round"/><ellipse cx="5.400" cy="3.800" rx="2.400" ry="1.300" fill="#fff" opacity="0.55"/></svg>
<div class="t " style="left:88px;top:169.96px;font-size:9.4px;line-height:11.28px;color:#25313f;font-weight:bold;letter-spacing:-0.522px;">Свойства</div>
<svg style="left:191px;top:169.5px" width="12" height="12" viewBox="0 0 12 12"><circle cx="6" cy="6" r="5" fill="#fdfdfd" stroke="#34506b" stroke-width="0.900"/></svg>
<div class="t " style="left:194.3px;top:170.70px;font-size:8.5px;line-height:10.20px;color:#2a4a6a;font-weight:bold;">?</div>
<div class="abs" style="left:26px;top:188px;width:182px;height:1px;background:#b8b8b8;"></div>
<div class="t " style="left:29.5px;top:194.08px;font-size:9.2px;line-height:11.04px;color:#46505c;letter-spacing:-0.229px;-webkit-text-stroke:0.300px #46505c;">Сообщение</div>
<svg style="left:197.5px;top:196px" width="9" height="6" viewBox="0 0 9 6"><path d="M0.800 5L4.500 1.300 8.200 5" fill="none" stroke="#555" stroke-width="1.300"/></svg>
<div class="abs" style="left:26px;top:209.5px;width:182px;height:26px;background:#fdfd7c;"></div>
<div class="t " style="left:29.5px;top:209.66px;font-size:8.9px;line-height:10.68px;color:#1a1a1a;letter-spacing:-0.101px;">Выберите объект или измените свойства о</div>
<div class="t " style="left:29.5px;top:219.06px;font-size:8.9px;line-height:10.68px;color:#1a1a1a;letter-spacing:-0.101px;">бъекта.</div>
<div class="abs" style="left:210px;top:127px;width:1px;height:394px;background:#e2e2e2;"></div>
<svg style="left:212px;top:303px" width="6" height="27" viewBox="0 0 6 27"><path d="M0.500 0.500h2l2.500 2.500v21l-2.500 2.500h-2z" fill="#f2f2f2" stroke="#a8a8a8" stroke-width="0.800"/><circle cx="2.600" cy="13.500" r="1.300" fill="#bbb" stroke="#888" stroke-width="0.500"/></svg>
<svg style="left:5px;top:138px" width="15" height="15" viewBox="0 0 15 15"><path d="M4.7 4.4h9v9h-9z M0.7000000000000002 0.7000000000000002h9v9h-9z M4.7 4.4l-4 -3.7 M13.7 4.4l-4 -3.7 M4.7 13.4l-4 -3.7 M13.7 13.4l-4 -3.7" fill="none" stroke="#333" stroke-width="0.900"/><rect x="4.7" y="4.4" width="9" height="9" rx="0.800" fill="#dfe6ea" stroke="#2f7fb0" stroke-width="1.500"/></svg>
<svg style="left:5px;top:158px" width="15" height="15" viewBox="0 0 15 15"><path d="M4.7 4.4h9v9h-9z M0.7000000000000002 0.7000000000000002h9v9h-9z M4.7 4.4l-4 -3.7 M13.7 4.4l-4 -3.7 M4.7 13.4l-4 -3.7 M13.7 13.4l-4 -3.7" fill="none" stroke="#c4c4c4" stroke-width="0.900"/></svg>
<svg style="left:5px;top:177.5px" width="15" height="15" viewBox="0 0 15 15"><path d="M4.7 4.4h9v9h-9z M0.7000000000000002 0.7000000000000002h9v9h-9z M4.7 4.4l-4 -3.7 M13.7 4.4l-4 -3.7 M4.7 13.4l-4 -3.7 M13.7 13.4l-4 -3.7" fill="none" stroke="#c4c4c4" stroke-width="0.900"/></svg>
<svg style="left:5px;top:197px" width="15" height="15" viewBox="0 0 15 15"><path d="M4.7 4.4h9v9h-9z M0.7000000000000002 0.7000000000000002h9v9h-9z M4.7 4.4l-4 -3.7 M13.7 4.4l-4 -3.7 M4.7 13.4l-4 -3.7 M13.7 13.4l-4 -3.7" fill="none" stroke="#c4c4c4" stroke-width="0.900"/></svg>
<svg style="left:5px;top:216.5px" width="15" height="15" viewBox="0 0 15 15"><path d="M4.7 4.4h9v9h-9z M0.7000000000000002 0.7000000000000002h9v9h-9z M4.7 4.4l-4 -3.7 M13.7 4.4l-4 -3.7 M4.7 13.4l-4 -3.7 M13.7 13.4l-4 -3.7" fill="none" stroke="#c4c4c4" stroke-width="0.900"/></svg>
<svg style="left:5px;top:236.2px" width="15" height="15" viewBox="0 0 15 15"><path d="M4.7 4.4h9v9h-9z M0.7000000000000002 0.7000000000000002h9v9h-9z M4.7 4.4l-4 -3.7 M13.7 4.4l-4 -3.7 M4.7 13.4l-4 -3.7 M13.7 13.4l-4 -3.7" fill="none" stroke="#c4c4c4" stroke-width="0.900"/></svg>
<svg style="left:5px;top:256px" width="15" height="15" viewBox="0 0 15 15"><path d="M7.500 1L13 4.200v6.600L7.500 14 2 10.800V4.200z M2 4.200l5.500 3.200L13 4.200M7.500 7.400V14" fill="none" stroke="#c4c4c4" stroke-width="0.900"/><path d="M2.800 9c2-4.500 6-6 10-5" fill="none" stroke="#c9c9c9" stroke-width="0.800"/></svg>
<div class="abs" style="left:4px;top:275px;width:19px;height:1px;background:#b5b5b5;"></div>
<svg style="left:5px;top:282px" width="15" height="15" viewBox="0 0 15 15"><path d="M13.500 1.500H4.500c-2 0-3 1-3 3v5c0 2 1 3 3 3h4" fill="none" stroke="#2f7fb0" stroke-width="1.400"/><circle cx="2.400" cy="2.400" r="1.800" fill="#f0a030"/><path d="M8.200 6v8l1.900-1.700 1.300 2.900 1.300-0.600-1.300-2.800h2.500z" fill="#fff" stroke="#222" stroke-width="0.800"/></svg>
<svg style="left:5px;top:301.5px" width="15" height="15" viewBox="0 0 15 15"><path d="M13.500 1.200H1.200v12.300H13.500" fill="none" stroke="#222" stroke-width="1.500"/><path d="M3.400 12.200l5-5c-0.800-2 0.800-4 3-3.400L9.800 5.400l1.200 1.400 1.800-1.400c0.600 2.200-1.400 3.800-3.400 3l-5 5z" fill="#2f86c9" stroke="#1d5f8a" stroke-width="0.500"/></svg>
<svg style="left:5px;top:320.5px" width="15" height="15" viewBox="0 0 15 15"><rect x="1" y="1" width="12.500" height="8" fill="#fafafa" stroke="#2f7fb0" stroke-width="1.400"/><path d="M1 12h5M4.500 10.200l2 1.800-2 1.800" fill="none" stroke="#222" stroke-width="1.100"/><rect x="9.500" y="11" width="3" height="2.400" fill="#ddd" stroke="#555" stroke-width="0.700"/></svg>
<svg style="left:5px;top:339.5px" width="15" height="15" viewBox="0 0 15 15"><path d="M1 3.200l2.600-2.200h7.400v8.400l-2.600 2.200H1z" fill="#8f8f8f" stroke="#555" stroke-width="0.800"/><path d="M1 3.200h7.400v8.400" fill="none" stroke="#444" stroke-width="0.700"/><rect x="6.200" y="6.400" width="8" height="8" fill="#2f7fb0" stroke="#1d5f8a" stroke-width="0.800"/><rect x="8.800" y="9" width="3" height="3" fill="#e8f0f5"/></svg>
<svg style="left:5px;top:359px" width="15" height="15" viewBox="0 0 15 15"><path d="M1 3.200l2.600-2.200h7.400v8.400l-2.600 2.200H1z" fill="#cfcfcf" stroke="#555" stroke-width="0.900"/><path d="M3 5h4v4.600H3z" fill="#f4f4f4" stroke="#555" stroke-width="0.700"/><rect x="6.200" y="6.400" width="8" height="8" fill="#2f7fb0" stroke="#1d5f8a" stroke-width="0.800"/><rect x="8.800" y="9" width="3" height="3" fill="#e8f0f5"/></svg>
<div class="abs" style="left:0px;top:382px;width:23px;height:1px;background:#b5b5b5;"></div>

<svg style="left:0px;top:0px" width="1024" height="578" viewBox="0 0 1024 578"><defs>
<filter id="blur12" x="-30%" y="-30%" width="160%" height="160%"><feGaussianBlur stdDeviation="11"/></filter>
<filter id="blur1" x="-10%" y="-10%" width="120%" height="120%"><feGaussianBlur stdDeviation="0.6"/></filter>
<linearGradient id="fus" x1="0" x2="1" y1="0" y2="0">
<stop offset="0" stop-color="#a99c00"/><stop offset="0.12" stop-color="#d8ca08"/><stop offset="0.3" stop-color="#efe63a"/><stop offset="0.46" stop-color="#e2d40c"/><stop offset="0.5" stop-color="#c9bc00"/><stop offset="0.56" stop-color="#e4d60e"/><stop offset="0.82" stop-color="#d8ca08"/><stop offset="1" stop-color="#a19400"/>
</linearGradient>
<linearGradient id="can" x1="0" x2="1" y1="0" y2="0">
<stop offset="0" stop-color="#6a6a6a"/><stop offset="0.3" stop-color="#a8a8a8"/><stop offset="0.5" stop-color="#9a9a9a"/><stop offset="0.7" stop-color="#b4b4b4"/><stop offset="1" stop-color="#666"/>
</linearGradient>
<linearGradient id="can2" x1="0" x2="0" y1="0" y2="1">
<stop offset="0" stop-color="#000" stop-opacity="0.15"/><stop offset="0.3" stop-color="#000" stop-opacity="0"/><stop offset="0.75" stop-color="#000" stop-opacity="0.05"/><stop offset="1" stop-color="#000" stop-opacity="0.45"/>
</linearGradient>
<linearGradient id="wingw" x1="0" x2="1" y1="0" y2="0">
<stop offset="0" stop-color="#e6e6e0"/><stop offset="0.6" stop-color="#f0f0ec"/><stop offset="1" stop-color="#dcdcd6"/>
</linearGradient>
<linearGradient id="stabR" x1="0" x2="1" y1="0" y2="0">
<stop offset="0" stop-color="#f0f0ec"/><stop offset="0.5" stop-color="#c8cacb"/><stop offset="1" stop-color="#e2e2de"/>
</linearGradient>
<g id="wingL">
<path d="M397 221L563 209.500 570 209v83l-14.300-2.800L397 261.500z" fill="url(#wingw)"/>
<path d="M397 221L570 208.500v8L558 217 497 226l23 3.500L397 242z" fill="#e4d60e"/>
<path d="M397 244.500L520.500 230.400 496.500 226.800 558 217.400 558 218.800 506 227.300 527 230.600 397 255.500z" fill="#3a3a3a"/>
<path d="M397 242L519 229.800 520.500 230.400 397 244.500z" fill="#f6f6f2"/>
<path d="M542.500 250L526 282.500 535 284.300z" fill="#c83030"/>
<path d="M554 238L538 284.800 546.500 286.500z" fill="#333"/>
<path d="M558 216l12-1v77.500l-21-4.200z" fill="#e4d60e"/>
<path d="M558 216l3 0-8 73-4-0.700z" fill="#cfc20a"/>
</g>
<g id="stabL">
<path d="M508.500 432.700L524.900 429.400 580 420.400 581.200 443.600 561.200 476 508.500 469z" fill="#e8e8e4"/>
<path d="M508.500 432.700L524.900 429.400 580 420.400 581 436 571 425.800 540 434 555 435.300 508.500 452.500z" fill="#e4d60e"/>
<path d="M508.500 453.500L554.500 435.600 539.500 434.400 570.500 426.200 571 427.200 545.500 434 558.500 435.200 508.500 457.500z" fill="#333"/>
<path d="M572 425.500l9.200 18.100-20 32.400-2.200-0.300z" fill="#cdbf08"/>
<path d="M572 425.500l8-5.100 1.200 23.200z" fill="#e4d60e"/>
<path d="M559 456.400L549 473.600 553 474.300z" fill="#c83030"/>
<path d="M563.600 449L555 474.700 558.500 475.300z" fill="#333"/>
</g>
</defs><filter id="blur7" x="-30%" y="-60%" width="160%" height="220%"><feGaussianBlur stdDeviation="10"/></filter><filter id="blur5" x="-80%" y="-30%" width="260%" height="160%"><feGaussianBlur stdDeviation="6"/></filter><path d="M606 200L782 212 786 268 622 304 606 335z" fill="#c8ccf2" opacity="0.400" filter="url(#blur7)"/><path d="M612 160L640 172 690 205 612 212z" fill="#9c9cb0" opacity="0.380" filter="url(#blur7)"/><path d="M604 300L626 300 618 380 600 400z" fill="#c8ccee" opacity="0.180" filter="url(#blur5)"/><path d="M596 425L668 432 668 472 612 480z" fill="#d4d7f4" opacity="0.350" filter="url(#blur5)"/><path d="M534.500 211c0.500-9 7.500-9 8-0.600z" fill="#b9ac10"/><path d="M629.500 210.600c0.500-9 7.500-9 8 0.600z" fill="#9c9010"/><use href="#wingL"/><g transform="translate(1172.600 -0.800) scale(-1 1)"><use href="#wingL"/></g><use href="#stabL"/><g transform="translate(1172.900 0) scale(-1 1)"><use href="#stabL"/><path d="M524.900 443.600L581.200 443.600 561.200 476 508.500 469 508.500 455z" fill="url(#stabR)" opacity="0.45"/></g><path d="M554.600 142L618 135.800 618 137 554.600 143.800z" fill="#55554c"/><path d="M586.300 119Q591 128 593.300 141.400L604 143.500Q612 145 612.400 150L610.800 194.300 593 420.400 590.300 457.200 586.300 505 582.600 457.200 580 420.400 562.600 194.300 560 150Q560.400 145 569 143.500L577.400 141.400Q581 128 586.300 119z" fill="url(#fus)"/><path d="M565 150c1.500 20 3 40 8 70l2 0c-4-30-5-50-5-70z" fill="#f6f08a" opacity="0.3"/><path d="M555.800 149l4.400-2.200 4.400 2.200-4.400 2.200 4.400 2.200-4.400 2.200-4.400-2.200 4.400-2.200z" fill="#0a0a0a"/><path d="M607.400 149l4.400-2.200 4.400 2.200-4.400 2.200 4.400 2.200-4.400 2.200-4.400-2.200 4.400-2.200z" fill="#0a0a0a"/><path d="M586.300 230c9.500 0 16.800 9 16.800 24 0 16-2 34-5 46-2 7-21.500 7-23.500 0-3-12-5.300-30-5.300-46 0-15 7.500-24 17-24z" fill="url(#can)"/><path d="M586.300 230c9.500 0 16.800 9 16.800 24 0 16-2 34-5 46-2 7-21.500 7-23.500 0-3-12-5.300-30-5.300-46 0-15 7.500-24 17-24z" fill="url(#can2)"/><path d="M582.600 457.200L586.300 505 590.300 457.200z" fill="#7a7000" opacity="0.550"/><path d="M586.300 121V505" stroke="#1a1a1a" stroke-width="1.200" stroke-dasharray="14 2.500 2.500 2.500" fill="none"/><path d="M586.300 124V157" stroke="#111" stroke-width="2.200" fill="none"/><path d="M584.600 150V215M588 150V215" stroke="#1a1a1a" stroke-width="0.700" stroke-dasharray="10 3 2 3" fill="none" opacity="0.800"/><path d="M586.300 119Q581 128 577.400 141.400M560.200 156L562.600 194.300 580 420.400 581.200 443.600 582.600 457.200 586.300 505" fill="none" stroke="#0a0af5" stroke-width="1.700" stroke-linejoin="round"/><path d="M586.300 119Q591 128 593.300 141.400M612.200 156L610.800 194.300 593 420.400 592.600 443.600 590.300 457.200 586.300 505" fill="none" stroke="#0a0af5" stroke-width="1.700" stroke-linejoin="round"/><path d="M577.400 141.400H593.300" fill="none" stroke="#0a0af5" stroke-width="1.700" stroke-linejoin="round"/><path d="M397 220.700L586.500 208 775.400 219" fill="none" stroke="#0a0af5" stroke-width="1.700" stroke-linejoin="round"/><path d="M397 220.700V261.500L555.700 289.200 586.500 294.700 615.500 289.200 775.400 260.500V219" fill="none" stroke="#0a0af5" stroke-width="1.700" stroke-linejoin="round"/><path d="M397 245.900L555.700 259.800V289.200" fill="none" stroke="#0a0af5" stroke-width="1.700" stroke-linejoin="round"/><path d="M775.400 245.200L615.500 259.800V289.200" fill="none" stroke="#0a0af5" stroke-width="1.700" stroke-linejoin="round"/><path d="M580 420.400L524.900 429.400 508.500 432.700V469L561.200 476 581.200 443.600" fill="none" stroke="#0a0af5" stroke-width="1.700" stroke-linejoin="round"/><path d="M593 420.400L647.500 429.400 664.400 432.700V469L612.100 476 592.600 443.600" fill="none" stroke="#0a0af5" stroke-width="1.700" stroke-linejoin="round"/><path d="M524.900 429.400V443.600H647.500V429.400" fill="none" stroke="#0a0af5" stroke-width="1.700" stroke-linejoin="round"/><path d="M581.500 450H593M582.600 457.200H590.300" fill="none" stroke="#0a0af5" stroke-width="1.700" stroke-linejoin="round"/><path d="M577.400 141.600L569 143.600 561.500 146.300 558.800 148M593.300 141.600L604 143.600 611 146.300 613.600 148" fill="none" stroke="#0a0af5" stroke-width="3" stroke-linejoin="round"/><path d="M567 146l1.500-4.500 2 3.500M605.500 146l-1.500-4.500-2 3.500M563 150l-3-1M610 150l3-1" fill="none" stroke="#0a0af5" stroke-width="1.300"/><path d="M562.600 194.300H610.800" stroke="#0a0af5" stroke-width="0.900" stroke-dasharray="9 2 2 2" fill="none"/><path d="M397 220.700L775.400 219.500" stroke="#0a0af5" stroke-width="1.100" stroke-dasharray="38 3 3 3" fill="none"/><path d="M558 164l6 4M558 168l6-4M561 163v6" stroke="#0a0af5" stroke-width="0.800"/><path d="M558.8 180l6 4M558.8 184l6-4M561.8 179v6" stroke="#0a0af5" stroke-width="0.800"/><path d="M608.6 164l6 4M608.6 168l6-4M611.6 163v6" stroke="#0a0af5" stroke-width="0.800"/><path d="M608.2 180l6 4M608.2 184l6-4M611.2 179v6" stroke="#0a0af5" stroke-width="0.800"/><path d="M576.8 130l6 4M576.8 134l6-4M579.8 129v6" stroke="#0a0af5" stroke-width="0.800"/><path d="M589.8 130l6 4M589.8 134l6-4M592.8 129v6" stroke="#0a0af5" stroke-width="0.800"/><circle cx="397" cy="220.7" r="2.500" fill="#0a0af5"/><circle cx="397" cy="245.9" r="2.500" fill="#0a0af5"/><circle cx="397" cy="261.5" r="2.500" fill="#0a0af5"/><circle cx="775.4" cy="219" r="2.500" fill="#0a0af5"/><circle cx="775.4" cy="245.2" r="2.500" fill="#0a0af5"/><circle cx="775.4" cy="260.5" r="2.500" fill="#0a0af5"/><circle cx="555.7" cy="259.8" r="2.500" fill="#0a0af5"/><circle cx="555.7" cy="289.2" r="2.500" fill="#0a0af5"/><circle cx="615.5" cy="259.8" r="2.500" fill="#0a0af5"/><circle cx="615.5" cy="289.2" r="2.500" fill="#0a0af5"/><circle cx="586.5" cy="208" r="2.500" fill="#0a0af5"/><circle cx="586.5" cy="294.7" r="2.500" fill="#0a0af5"/><circle cx="562.6" cy="194.3" r="2.500" fill="#0a0af5"/><circle cx="610.8" cy="194.3" r="2.500" fill="#0a0af5"/><circle cx="583.5" cy="215.5" r="2.500" fill="#0a0af5"/><circle cx="583.5" cy="219.5" r="2.500" fill="#0a0af5"/><circle cx="508.5" cy="432.7" r="2.500" fill="#0a0af5"/><circle cx="508.5" cy="469" r="2.500" fill="#0a0af5"/><circle cx="524.9" cy="429.4" r="2.500" fill="#0a0af5"/><circle cx="524.9" cy="443.6" r="2.500" fill="#0a0af5"/><circle cx="580" cy="420.4" r="2.500" fill="#0a0af5"/><circle cx="593" cy="420.4" r="2.500" fill="#0a0af5"/><circle cx="561.2" cy="476" r="2.500" fill="#0a0af5"/><circle cx="612.1" cy="476" r="2.500" fill="#0a0af5"/><circle cx="647.5" cy="429.4" r="2.500" fill="#0a0af5"/><circle cx="647.5" cy="443.6" r="2.500" fill="#0a0af5"/><circle cx="664.4" cy="432.7" r="2.500" fill="#0a0af5"/><circle cx="664.4" cy="469" r="2.500" fill="#0a0af5"/><circle cx="581.2" cy="443.6" r="2.500" fill="#0a0af5"/><circle cx="592.6" cy="443.6" r="2.500" fill="#0a0af5"/><circle cx="581.5" cy="450" r="2.500" fill="#0a0af5"/><circle cx="593" cy="450" r="2.500" fill="#0a0af5"/><circle cx="582.6" cy="457.2" r="2.500" fill="#0a0af5"/><circle cx="590.3" cy="457.2" r="2.500" fill="#0a0af5"/><circle cx="586.3" cy="505" r="2.500" fill="#0a0af5"/><circle cx="586.300" cy="118.800" r="2.300" fill="#111"/></svg>

<svg style="left:463px;top:113px" width="16" height="16" viewBox="0 0 16 16"><path d="M7 10.500L1.800 15" stroke="#5b9cc4" stroke-width="2.200" stroke-linecap="round"/><circle cx="10" cy="6.500" r="4.700" fill="#eef4f8" stroke="#7d97a8" stroke-width="1.200"/><circle cx="10" cy="6.500" r="1.500" fill="#fff" stroke="#9ab" stroke-width="0.500"/><path d="M10 2.600v1.600M10 8.800v1.600M6.100 6.500h1.600M12.300 6.500h1.600" stroke="#5f7f94" stroke-width="0.900"/></svg>
<svg style="left:481.5px;top:113px" width="17" height="16" viewBox="0 0 17 16"><rect x="4.500" y="1" width="11" height="10" fill="none" stroke="#555" stroke-width="0.800" stroke-dasharray="1.500 1.200"/><path d="M6.500 11L1.800 15" stroke="#5b9cc4" stroke-width="2.200" stroke-linecap="round"/><circle cx="9.500" cy="6.500" r="4.700" fill="#e6eff5" stroke="#8da3b2" stroke-width="1.200"/></svg>
<svg style="left:502px;top:113px" width="16" height="16" viewBox="0 0 16 16"><path d="M1.200 9.200L7.200 5 10.800 1.200 13.800 4.200 10 7.800 5.800 13.800C4.800 14.800 0.200 10.200 1.200 9.200z" fill="#dedede" stroke="#8a8a8a" stroke-width="0.800" stroke-linejoin="round"/><path d="M7.200 5l2.800 2.800M1.200 9.200c1.800-0.600 5 2.600 4.600 4.600" fill="none" stroke="#8a8a8a" stroke-width="0.700"/><path d="M9 12.600h6" stroke="#2f86c9" stroke-width="1.700"/><path d="M11 9.800L7.800 12.600l3.200 2.800z" fill="#2f86c9"/></svg>
<svg style="left:521.5px;top:114px" width="15" height="14" viewBox="0 0 15 14"><path d="M1 4.500C1 2.500 4 1.200 7.500 1.200S14 2.500 14 4.500v7l-3.500 1.500V6.500h-6V13L1 11.500z" fill="#f4f4f4" stroke="#555" stroke-width="0.900"/><path d="M1 4.500v7L4.500 13V6z" fill="#3f97c8" stroke="#236a94" stroke-width="0.600"/><path d="M10.500 6v7l3.500-1.500v-7z" fill="#3f97c8" stroke="#236a94" stroke-width="0.600"/><path d="M4.500 6.400h6" stroke="#555" stroke-width="0.700"/></svg>
<svg style="left:540.5px;top:113px" width="16" height="16" viewBox="0 0 16 16"><path d="M1.200 9.200L7.200 5 10.800 1.200 13.800 4.200 10 7.800 5.800 13.800C4.800 14.800 0.200 10.200 1.200 9.200z" fill="#dedede" stroke="#8a8a8a" stroke-width="0.800" stroke-linejoin="round"/><path d="M7.200 5l2.800 2.800M1.200 9.200c1.800-0.600 5 2.600 4.600 4.600" fill="none" stroke="#8a8a8a" stroke-width="0.700"/><path d="M3 6.500L7.500 1l1.200 2.400L11.500 2 6.500 8 5.600 5.400z" fill="#f0952b"/><path d="M9.800 15.500l2.500-7 2.500 7M10.800 13h3.200" fill="none" stroke="#2f7fb0" stroke-width="1.200"/></svg>
<svg style="left:560.5px;top:113px" width="15" height="15" viewBox="0 0 15 15"><path d="M1 4.800L5 1h9v9.400L10 14.200H1z" fill="#fbfbfb" stroke="#666" stroke-width="0.800"/><path d="M5 1v4M14 1l-4 3.800M9.500 1v3.800M14 5.600l-4 3.800M12 2.900v9.400" fill="none" stroke="#888" stroke-width="0.600"/><rect x="1" y="4.800" width="9" height="9.400" fill="#7fbfe0" stroke="#236a94" stroke-width="0.800"/></svg>
<svg style="left:592px;top:113.5px" width="15" height="15" viewBox="0 0 15 15"><path d="M1 3.600L4 1h9.600v9.800L10.400 14H1z" fill="#d4e9f4" stroke="#7a8f9c" stroke-width="0.800"/><path d="M1 3.600h6v10.400H1z" fill="#8cc6e4" stroke="#5a8eab" stroke-width="0.600"/><path d="M7 3.600h3.400V14H7z" fill="#f8fbfd" stroke="#9ab" stroke-width="0.500"/><path d="M10.400 3.600L13.600 1" stroke="#7a8f9c" stroke-width="0.700"/></svg>
<svg style="left:611.3px;top:119.9px" width="4.4" height="2.7" viewBox="0 0 4.4 2.7"><path d="M0 0h4.400L2.200 2.700z" fill="#666"/></svg>
<svg style="left:621.5px;top:114.5px" width="15" height="13" viewBox="0 0 15 13"><path d="M0.800 6.500C3.500 1.800 11.500 1.800 14.200 6.500 11.500 11 3.500 11 0.800 6.500z" fill="#e2e2e2" stroke="#8c8c8c" stroke-width="1"/><circle cx="7.500" cy="6" r="3" fill="#7d7d7d"/><circle cx="7.500" cy="6" r="1.300" fill="#444"/><path d="M7.700 3v9.600" stroke="#6c6c6c" stroke-width="0.900"/></svg>
<svg style="left:641.3px;top:119.9px" width="4.4" height="2.7" viewBox="0 0 4.4 2.7"><path d="M0 0h4.400L2.200 2.700z" fill="#666"/></svg>
<svg style="left:651.5px;top:113px" width="16" height="16" viewBox="0 0 16 16"><circle cx="6.500" cy="6" r="5.300" fill="#ececec" stroke="#dadada" stroke-width="0.800"/><path d="M8 10.500l5-5 2 2-5.500 5.500-1.500 2.500z" fill="#f3f3f3" stroke="#d6d6d6" stroke-width="0.800"/></svg>
<svg style="left:670.5px;top:112.5px" width="16" height="17" viewBox="0 0 16 17"><path d="M1.500 9.500h13v6.500h-13z" fill="#fff" stroke="#333" stroke-width="1"/><path d="M1.500 13.800h2.600v2.200H1.500zM6.700 13.800h2.600v2.200H6.700zM11.900 13.800h2.600v2.200h-2.600zM4.100 11.600h2.600v2.200H4.100zM9.300 11.600h2.600v2.200H9.300z" fill="#333"/><circle cx="8" cy="6.200" r="5.400" fill="#e2483a"/><path d="M8 6.200L2.800 4.600A5.400 5.400 0 0 1 9.600 1z" fill="#3b7fd0"/><path d="M8 6.200L2.800 4.600A5.400 5.400 0 0 0 6 11.200z" fill="#43a84a"/><path d="M8 6.200L6 11.200A5.400 5.400 0 0 0 12.600 9z" fill="#efc12d"/><ellipse cx="6.500" cy="3.300" rx="2.400" ry="1.200" fill="#fff" opacity="0.450"/></svg>
<svg style="left:691.3px;top:119.9px" width="4.4" height="2.7" viewBox="0 0 4.4 2.7"><path d="M0 0h4.400L2.200 2.700z" fill="#666"/></svg>
<svg style="left:701.5px;top:114px" width="15" height="14" viewBox="0 0 15 14"><rect x="0.700" y="0.700" width="13.600" height="9" fill="#e4e4e4" stroke="#555" stroke-width="1.200"/><path d="M7.500 9.700v3M4.500 13h6" stroke="#555" stroke-width="1.200"/></svg>
<svg style="left:721.3px;top:119.9px" width="4.4" height="2.7" viewBox="0 0 4.4 2.7"><path d="M0 0h4.400L2.200 2.700z" fill="#666"/></svg>
<svg style="left:731px;top:113.5px" width="15" height="15" viewBox="0 0 15 15"><path d="M0.500 10.500L6.500 7.500l7.500 2.600-6.500 4z" fill="#8cc3e2" stroke="#4c8fb8" stroke-width="0.600"/><path d="M7 10.500V2.200" stroke="#333" stroke-width="1.200"/><path d="M4.800 3.800L7 0.600l2.200 3.200z" fill="#333"/></svg>
<svg style="left:901.5px;top:117px" width="10" height="10" viewBox="0 0 10 10"><rect x="0.5" y="0.500" width="8" height="9" fill="#fcfcfc" stroke="#9a9a9a" stroke-width="0.900"/><path d="M5.600 3.200L3.400 5l2.200 1.800z" fill="#777"/></svg>
<svg style="left:921.5px;top:117px" width="10" height="10" viewBox="0 0 10 10"><rect x="0.5" y="0.500" width="8" height="9" fill="#fcfcfc" stroke="#9a9a9a" stroke-width="0.900"/><path d="M4 3.200L6.200 5 4 6.800z" fill="#777"/></svg>
<div class="abs" style="left:942px;top:124px;width:8px;height:2px;background:#929292;"></div>
<svg style="left:959px;top:116.5px" width="12" height="10" viewBox="0 0 12 10"><rect x="3.500" y="0.600" width="7" height="5.500" fill="none" stroke="#8a8a8a" stroke-width="0.900"/><rect x="0.600" y="3" width="7" height="5.500" fill="#fff" stroke="#8a8a8a" stroke-width="0.900"/></svg>
<svg style="left:981px;top:117.5px" width="9" height="9" viewBox="0 0 9 9"><path d="M0.500 0.500l7.500 7.500M8 0.500L0.500 8" stroke="#8a8a8a" stroke-width="1"/></svg>
<svg style="left:921px;top:134px" width="36" height="28" viewBox="0 0 36 28"><path d="M17 2H1.800v14c0 3 1.500 4.800 4.500 4.800h12" fill="none" stroke="#d3e3ee" stroke-width="1.400"/><path d="M34.500 12.500c-1 5-5 7.600-10 7.400v3.600L17.800 18.600l6.700-6.200v3.400c4 0.200 8-1 10-3.300z" fill="#d7e7f0" stroke="#c0d6e4" stroke-width="0.600"/></svg>
<svg style="left:956px;top:158.5px" width="19" height="19" viewBox="0 0 19 19"><path d="M3.400 0.300L9.300 6.200 15.200 0.300 18.500 3.600 12.600 9.500l5.900 5.900-3.300 3.300L9.300 12.800 3.400 18.700 0.100 15.400l5.900-5.900L0.100 3.600z" fill="#f5c4c4"/></svg>
<svg style="left:236px;top:444px" width="40" height="42" viewBox="0 0 40 42"><path d="M7.300 34V18" stroke="#1f7a2a" stroke-width="2.600"/><path d="M4.200 19.200L7.300 11.800l3.100 7.400z" fill="#1a6a24"/><path d="M7.300 34.300h16" stroke="#c62828" stroke-width="2.600"/><path d="M22.400 31.200L29.800 34.300l-7.400 3.100z" fill="#b52020"/><circle cx="7.300" cy="34.300" r="3.300" fill="#1212b8"/></svg>
<div class="t " style="left:240.3px;top:446.44px;font-size:8.6px;line-height:10.32px;color:#2a9a3a;font-weight:bold;font-family:'Liberation Serif',serif;">Y</div>
<div class="t " style="left:266.3px;top:473.24px;font-size:8.6px;line-height:10.32px;color:#f03030;font-weight:bold;font-family:'Liberation Serif',serif;">X</div>
<div class="t " style="left:222px;top:509.90px;font-size:9px;line-height:10.80px;color:#111;font-weight:bold;font-family:'Liberation Serif',serif;letter-spacing:0.212px;">*Спереди</div>

<div class="abs" style="left:993.5px;top:110px;width:4.5px;height:412px;background:#eef0f6;"></div>
<div class="abs" style="left:999px;top:110px;width:2px;height:411px;background:#f6f6f6;"></div>
<div class="abs" style="left:1001px;top:110px;width:1px;height:411px;background:#c8c8c8;"></div>
<div class="abs" style="left:1002px;top:110px;width:22px;height:411px;background:#f4f4f4;"></div>
<svg style="left:1004px;top:111.5px" width="20" height="2" viewBox="0 0 20 2"><rect x="0.0" y="0" width="1.200" height="1.200" fill="#9a9a9a"/><rect x="2.4" y="0" width="1.200" height="1.200" fill="#9a9a9a"/><rect x="4.8" y="0" width="1.200" height="1.200" fill="#9a9a9a"/><rect x="7.2" y="0" width="1.200" height="1.200" fill="#9a9a9a"/><rect x="9.6" y="0" width="1.200" height="1.200" fill="#9a9a9a"/><rect x="12.0" y="0" width="1.200" height="1.200" fill="#9a9a9a"/><rect x="14.4" y="0" width="1.200" height="1.200" fill="#9a9a9a"/><rect x="16.8" y="0" width="1.200" height="1.200" fill="#9a9a9a"/></svg>
<div class="abs" style="left:979.5px;top:148px;width:19.5px;height:108px;background:#c9c9c9;border:1px solid #a9a9a9;box-sizing:border-box;"></div>
<div class="abs" style="left:979.5px;top:148px;width:19.5px;height:18.5px;background:#f6f6f6;border:1px solid #a9a9a9;box-sizing:border-box;border-right:none;"></div>
<div class="abs" style="left:980.5px;top:184px;width:17.5px;height:1px;background:#a9a9a9;"></div>
<div class="abs" style="left:980.5px;top:202px;width:17.5px;height:1px;background:#a9a9a9;"></div>
<div class="abs" style="left:980.5px;top:220px;width:17.5px;height:1px;background:#a9a9a9;"></div>
<div class="abs" style="left:980.5px;top:238px;width:17.5px;height:1px;background:#a9a9a9;"></div>
<svg style="left:982px;top:150px" width="14" height="14" viewBox="0 0 14 14"><path d="M0.800 7.200L7 1.400 13.200 7.200" fill="none" stroke="#1f5f8c" stroke-width="2.300"/><path d="M3 7v6h8V7" fill="#fff" stroke="#333" stroke-width="1"/><rect x="5.600" y="8.800" width="2.800" height="4.200" fill="#fff" stroke="#333" stroke-width="0.800"/></svg>
<svg style="left:982px;top:168px" width="14" height="14" viewBox="0 0 14 14"><path d="M1.500 4l3-2.500 3 1.500 3-1.500 2.500 2v7L10 13l-3-1.500L4 13l-2.500-2z" fill="#e9e9e9" stroke="#333" stroke-width="0.900"/><path d="M4.500 3.500V13M7 3v9M9.500 3.500V13" stroke="#333" stroke-width="0.800"/></svg>
<svg style="left:981.5px;top:186.5px" width="15" height="13" viewBox="0 0 15 13"><path d="M1 12V1.500h4l1.200 1.500h5.300v2.500" fill="#e8e8e8" stroke="#333" stroke-width="0.900"/><path d="M1 12l2.800-6.500h10.500L11.500 12z" fill="#f5f5f5" stroke="#333" stroke-width="0.900"/></svg>
<svg style="left:982px;top:204px" width="14" height="14" viewBox="0 0 14 14"><rect x="0.700" y="0.700" width="12.600" height="12.600" fill="#6e6e6e" stroke="#3a3a3a" stroke-width="0.800"/><path d="M2.500 3.500h6v2.200H6.800v2.200h2.400v2.400H2.500V7.900h2.100V5.700H2.500z" fill="#f0c02a"/><rect x="10" y="3" width="2" height="2" fill="#f0c02a"/><rect x="10" y="6.500" width="2" height="5" fill="#ddd"/></svg>
<svg style="left:982px;top:222px" width="14" height="14" viewBox="0 0 14 14"><circle cx="7" cy="7" r="6" fill="#e23d2c"/><path d="M7 7L7 1A6 6 0 0 0 1.200 8.200z" fill="#2f86c9"/><path d="M7 7L1.200 8.200A6 6 0 0 0 7.800 12.950z" fill="#43a84a"/><path d="M7 7L7.800 12.950A6 6 0 0 0 12.800 8.600z" fill="#f0c02a"/><ellipse cx="5.500" cy="3.600" rx="2.600" ry="1.300" fill="#fff" opacity="0.450"/></svg>
<svg style="left:982px;top:240px" width="14" height="14" viewBox="0 0 14 14"><rect x="0.700" y="0.700" width="12.600" height="12.600" rx="1" fill="#f4f4f4" stroke="#333" stroke-width="1"/><rect x="0.700" y="0.700" width="12.600" height="2.400" fill="#2f7fb0"/><rect x="2.200" y="4.800" width="2.800" height="1.800" fill="#2f7fb0"/><rect x="2.200" y="7.600" width="2.800" height="1.800" fill="#2f7fb0"/><rect x="2.200" y="10.300" width="2.800" height="1.600" fill="#2f7fb0"/><path d="M6 5.700h5.800M6 8.500h5.800M6 11.100h5.800" stroke="#555" stroke-width="1.100"/></svg>
<svg style="left:1005px;top:121.0px" width="15" height="15" viewBox="0 0 15 15"><path d="M3 9.500L10.500 3l3 3.500" fill="none" stroke="#2f7fb0" stroke-width="1.500"/><path d="M2 6.500l6 6.500M2 6.500l3.200 0.300M2 6.500l0.400 3" fill="none" stroke="#222" stroke-width="1.100"/></svg>
<svg style="left:1005px;top:140.5px" width="15" height="15" viewBox="0 0 15 15"><path d="M1.500 1v7.500M13.500 1v7.500" stroke="#2f7fb0" stroke-width="1.400"/><path d="M1.500 4.500h12" stroke="#222" stroke-width="1"/><path d="M1.500 4.500l2.600-1.600v3.200zM13.500 4.500l-2.600-1.600v3.200z" fill="#222"/><path d="M1 13.500h13" stroke="#222" stroke-width="1.500"/></svg>
<svg style="left:1005px;top:160.5px" width="15" height="15" viewBox="0 0 15 15"><path d="M1 1.500h9M1 13.500h9" stroke="#2f7fb0" stroke-width="1.400"/><path d="M1.800 1v13" stroke="#222" stroke-width="1.500"/><path d="M12 2v11" stroke="#222" stroke-width="1"/><path d="M12 1.500l-1.700 2.800h3.400zM12 13.500l-1.700-2.800h3.400z" fill="#222"/></svg>
<svg style="left:1005px;top:180.5px" width="15" height="15" viewBox="0 0 15 15"><path d="M1.500 1v13M7.500 1v13M13.500 1v13" stroke="#cfcfcf" stroke-width="1.100"/><path d="M1.500 5h12M1.500 10h12" stroke="#cfcfcf" stroke-width="0.900"/><path d="M1.500 13.800h12" stroke="#cfcfcf" stroke-width="1.300"/></svg>
<svg style="left:1005px;top:200.5px" width="15" height="15" viewBox="0 0 15 15"><path d="M2 8.500l4.500-4.500 2.500 2.500-4.500 4.500z" fill="none" stroke="#2f7fb0" stroke-width="1.300"/><path d="M8 11.500l4.500-4.500" stroke="#2f7fb0" stroke-width="1.300"/><path d="M5 11.500l2.500 2.500M11 4l2.500 2.500" stroke="#222" stroke-width="1.100"/><path d="M9.500 1.500l1 1.500" stroke="#222" stroke-width="0.800"/></svg>
<svg style="left:1005px;top:220.0px" width="15" height="15" viewBox="0 0 15 15"><path d="M1.800 4.500V10h5.600v3.500h5V4.500" fill="none" stroke="#2f7fb0" stroke-width="1.300"/><path d="M1 13.800h13" stroke="#222" stroke-width="1.100"/><path d="M1.800 0.800v2.400M7.400 0.800v2.400M12.400 0.800v2.400" stroke="#222" stroke-width="1"/></svg>
<svg style="left:1005px;top:239.5px" width="15" height="15" viewBox="0 0 15 15"><path d="M9.500 2H4v5H1.500v6.500h8" fill="none" stroke="#222" stroke-width="1.200"/><path d="M9 2h3M9 7.500h3M9 13h3" stroke="#2f7fb0" stroke-width="1.200"/><path d="M13.500 0.500v3.500M13.500 5.800v3.500M13.500 11v3.500" stroke="#222" stroke-width="0.900"/></svg>
<svg style="left:1005px;top:259.5px" width="15" height="15" viewBox="0 0 15 15"><path d="M3 12c2-1 3-3 3.500-5.500M6.500 6.500c2 0.500 4 2 5.500 4" fill="none" stroke="#cfcfcf" stroke-width="1" stroke-dasharray="1.500 1"/><path d="M4 1.500v3M12.500 11h2" stroke="#cfcfcf" stroke-width="0.900"/></svg>
<svg style="left:1005px;top:278.5px" width="15" height="15" viewBox="0 0 15 15"><ellipse cx="7.500" cy="6" rx="6" ry="4.300" fill="none" stroke="#2f7fb0" stroke-width="1.400"/><path d="M5.500 4.200h4.500c0 2-1 3.200-3 3.400" fill="none" stroke="#222" stroke-width="1"/><path d="M3 13.500h9" stroke="#222" stroke-width="1.300"/></svg>
<svg style="left:1005px;top:298.0px" width="15" height="15" viewBox="0 0 15 15"><path d="M2 2c3 1 4.500 3 5 6.500M13 2.500C10.500 4 8 6 7 8.500v5.500" fill="none" stroke="#cfcfcf" stroke-width="1.200"/></svg>
<svg style="left:1005px;top:317.5px" width="15" height="15" viewBox="0 0 15 15"><path d="M12.500 1.500H2.500v9c0 2 1 3 3 3h7" fill="none" stroke="#222" stroke-width="1.400"/><path d="M2.500 4h8M2.500 7h8M5.500 1.500v9M8.500 1.500v9" stroke="#dcdcdc" stroke-width="0.600"/></svg>
<svg style="left:1005px;top:337.5px" width="15" height="15" viewBox="0 0 15 15"><path d="M4.500 1.500V13" stroke="#222" stroke-width="1.500"/><path d="M1 13.200h13" stroke="#222" stroke-width="1.500"/><path d="M4.500 8.500h5V13" fill="none" stroke="#2f7fb0" stroke-width="1.300"/></svg>
<div class="abs" style="left:1003px;top:355.5px;width:19px;height:19px;background:#c4c4c4;border:1px solid #8c8c8c;box-sizing:border-box;"></div>
<svg style="left:1005px;top:357.5px" width="15" height="15" viewBox="0 0 15 15"><path d="M3.500 2V12.500" stroke="#222" stroke-width="1.400"/><path d="M1.500 12.800h12" stroke="#222" stroke-width="1.400"/><path d="M3.500 8h4.500v4.500" fill="none" stroke="#2f7fb0" stroke-width="1.200"/><path d="M11.500 1.500L6 8l2.200-0.300L6.500 12l5.500-6.500-2.300 0.400z" fill="#f0952b" stroke="#c66a10" stroke-width="0.400"/></svg>
<svg style="left:1005px;top:377.0px" width="15" height="15" viewBox="0 0 15 15"><path d="M4 1v10" stroke="#222" stroke-width="1.400"/><path d="M1 11.200h9" stroke="#222" stroke-width="1.400"/><path d="M7.500 11.500c1.500-2.500 5-2.500 6.500 0-1.500 2.500-5 2.500-6.500 0z" fill="#eee" stroke="#222" stroke-width="0.800"/><circle cx="10.800" cy="11.500" r="1.300" fill="#222"/></svg>
<svg style="left:1005px;top:395.0px" width="15" height="15" viewBox="0 0 15 15"><path d="M4 5.500h7M4 9h7" stroke="#cfcfcf" stroke-width="1.300"/></svg>
<svg style="left:1005px;top:413.0px" width="15" height="15" viewBox="0 0 15 15"><path d="M2 3v4M2 5h8M10 3v8M10 9h3" fill="none" stroke="#cfcfcf" stroke-width="1.200"/></svg>
<div class="abs" style="left:1003px;top:438px;width:21px;height:1px;background:#b5b5b5;"></div>

<div class="abs" style="left:0px;top:521px;width:212px;height:13px;background:#f1f1f1;"></div>
<div class="abs" style="left:25px;top:522.5px;width:49px;height:11px;background:#aaaaaa;border:1px solid #959595;box-sizing:border-box;"></div>
<div class="abs" style="left:27px;top:524px;width:10.5px;height:9.5px;background:#b2b2b2;border:1px solid #a0a0a0;box-sizing:border-box;"></div>
<div class="abs" style="left:39px;top:524px;width:10.5px;height:9.5px;background:#b2b2b2;border:1px solid #a0a0a0;box-sizing:border-box;"></div>
<div class="abs" style="left:51px;top:524px;width:10.5px;height:9.5px;background:#b2b2b2;border:1px solid #a0a0a0;box-sizing:border-box;"></div>
<div class="abs" style="left:63px;top:524px;width:10.5px;height:9.5px;background:#b2b2b2;border:1px solid #a0a0a0;box-sizing:border-box;"></div>
<svg style="left:28.5px;top:525.2px" width="8" height="7" viewBox="0 0 8 7"><path d="M1 0.500v6" stroke="#c4c4c4" stroke-width="1"/><path d="M6.500 0.500L2.500 3.500l4 3z" fill="#c4c4c4"/></svg>
<svg style="left:40.5px;top:525.2px" width="8" height="7" viewBox="0 0 8 7"><path d="M6 0.500L2 3.500l4 3z" fill="#c4c4c4"/></svg>
<svg style="left:52.5px;top:525.2px" width="8" height="7" viewBox="0 0 8 7"><path d="M2 0.500L6 3.500l-4 3z" fill="#c4c4c4"/></svg>
<svg style="left:64.5px;top:525.2px" width="8" height="7" viewBox="0 0 8 7"><path d="M7 0.500v6" stroke="#c4c4c4" stroke-width="1"/><path d="M1.500 0.500L5.500 3.500l-4 3z" fill="#c4c4c4"/></svg>
<div class="t " style="left:84px;top:522.72px;font-size:9.3px;line-height:11.16px;color:#111;font-weight:bold;letter-spacing:-0.334px;">Модель</div>
<div class="abs" style="left:125px;top:522.5px;width:96.5px;height:11.5px;background:#d6d6d6;border:1px solid #a4a4a4;box-sizing:border-box;"></div>
<div class="t " style="left:136px;top:522.98px;font-size:9.2px;line-height:11.04px;color:#222;letter-spacing:-0.244px;">Трехмерные виды</div>
<div class="abs" style="left:221px;top:522.5px;width:135.5px;height:11.5px;background:#d6d6d6;border:1px solid #a4a4a4;box-sizing:border-box;"></div>
<div class="t " style="left:231px;top:522.98px;font-size:9.2px;line-height:11.04px;color:#222;letter-spacing:-0.213px;">Исследование движения 1</div>
<div class="abs" style="left:356.5px;top:522px;width:641.5px;height:12px;background:#f8f8f8;border-top:1px solid #a2a2a2;border-bottom:1px solid #c6c6c6;box-sizing:border-box;"></div>
<div class="abs" style="left:998px;top:522px;width:26px;height:12px;background:#f7f7f7;border-bottom:1px solid #c6c6c6;box-sizing:border-box;"></div>
<div class="abs" style="left:997.5px;top:523px;width:1px;height:10.5px;background:#d0dde0;"></div>
<div class="abs" style="left:0px;top:534.5px;width:1024px;height:13.5px;background:#fafafa;"></div>
<div class="t " style="left:1px;top:536.62px;font-size:9.3px;line-height:11.16px;color:#111;letter-spacing:-0.448px;">SOLIDWORKS Premium 2017 x64 Edition</div>
<div class="t " style="left:558.5px;top:536.96px;font-size:8.9px;line-height:10.68px;color:#222;letter-spacing:-0.045px;">3210.89мм</div>
<div class="t " style="left:619.5px;top:536.96px;font-size:8.9px;line-height:10.68px;color:#222;letter-spacing:-0.182px;">141.24мм</div>
<div class="t " style="left:669px;top:536.96px;font-size:8.9px;line-height:10.68px;color:#222;letter-spacing:0.038px;">0мм Недоопределен</div>
<div class="abs" style="left:765px;top:536px;width:1px;height:11px;background:#d0d0d0;"></div>
<div class="t " style="left:769px;top:536.96px;font-size:8.9px;line-height:10.68px;color:#222;letter-spacing:-0.140px;">Редактируется Эскиз2</div>
<div class="abs" style="left:863px;top:536px;width:1px;height:11px;background:#d0d0d0;"></div>
<div class="abs" style="left:875px;top:536px;width:1px;height:11px;background:#d0d0d0;"></div>
<div class="t " style="left:906.5px;top:536.96px;font-size:8.9px;line-height:10.68px;color:#222;letter-spacing:0.331px;">ММГС</div>
<svg style="left:954.5px;top:540px" width="5" height="3" viewBox="0 0 5 3"><path d="M0 3h5L2.500 0z" fill="#333"/></svg>
<svg style="left:1009px;top:535.5px" width="13" height="12" viewBox="0 0 13 12"><path d="M1 4.500L6 1l6 4.500v3L7 11 1 7.500z" fill="#e6e6e6" stroke="#555" stroke-width="0.900"/><path d="M1 4.500l6 3.500 5-2.500M7 8v3" fill="none" stroke="#555" stroke-width="0.700"/><circle cx="6" cy="3.600" r="1" fill="#555"/></svg>

<svg style="left:12px;top:557px" width="13" height="13" viewBox="0 0 13 13"><path d="M0 1.900L5.300 1.100v5.100H0zM6.200 1L13 0v6.200H6.200zM0 7h5.300v5.100L0 11.300zM6.200 7H13v6.200l-6.800-1z" fill="#fff"/></svg>
<svg style="left:45px;top:554px" width="18" height="18" viewBox="0 0 18 18"><circle cx="10.500" cy="7" r="5.400" fill="none" stroke="#fff" stroke-width="1.800"/><path d="M6.600 11L1.500 16.200" stroke="#fff" stroke-width="2.100" stroke-linecap="round"/></svg>
<svg style="left:85px;top:552px" width="17" height="21" viewBox="0 0 17 21"><defs><linearGradient id="pd" x1="0" x2="1" y1="0" y2="1"><stop offset="0" stop-color="#f7b52a"/><stop offset="0.350" stop-color="#e9508a"/><stop offset="0.650" stop-color="#8a4fd8"/><stop offset="1" stop-color="#19b4e8"/></linearGradient></defs><path d="M8.500 0.800C11 5 15.800 8.600 15.800 13.400A7.300 7.300 0 0 1 1.200 13.400C1.200 8.600 6.500 5 8.500 0.800z" fill="url(#pd)"/><path d="M3 16c3-1 6-4.500 7-9 2.500 2.500 5.500 4.800 5.500 7.500-1 4-8 6.500-12.500 1.500z" fill="#2aa7e6" opacity="0.700"/></svg>
<div class="abs" style="left:114.5px;top:548px;width:8px;height:30px;background:#2d6b2d;"></div>
<div class="abs" style="left:122.5px;top:548px;width:22px;height:30px;background:#252525;"></div>
<div class="abs" style="left:114.5px;top:576px;width:30px;height:2px;background:#46c046;"></div>
<svg style="left:121px;top:555.5px" width="18" height="15" viewBox="0 0 18 15"><path d="M0.500 2c0-0.800 0.500-1.300 1.300-1.300h4.500l1.500 1.700h8.400c0.800 0 1.300 0.500 1.300 1.300V13c0 0.800-0.500 1.300-1.300 1.300H1.800C1 14.300 0.500 13.800 0.500 13z" fill="#e8a92c"/><path d="M0.500 4.200h17V13c0 0.800-0.500 1.300-1.300 1.300H1.800C1 14.300 0.500 13.800 0.500 13z" fill="#f9d152"/><path d="M5 10h8v4.300H5z" fill="#2f86d6"/><path d="M7 12h4v2.300H7z" fill="#f9d152"/></svg>
<svg style="left:157.5px;top:554.5px" width="17" height="18" viewBox="0 0 17 18"><path fill-rule="evenodd" d="M8.500 0.300A8.200 8.700 0 1 0 8.500 17.700A8.200 8.700 0 1 0 8.500 0.300zM8.500 2.800A3.700 6.200 0 1 1 8.500 15.200A3.700 6.200 0 1 1 8.500 2.800z" fill="#e81e24"/></svg>
<svg style="left:193.500px;top:553.500px" width="20" height="18" viewBox="0 0 20 18"><defs><linearGradient id="eg" x1="0" x2="1" y1="0" y2="0"><stop offset="0" stop-color="#1b6fc2"/><stop offset="0.600" stop-color="#2bb3c6"/><stop offset="1" stop-color="#58cf5c"/></linearGradient></defs><path d="M10 0.600c5 0 9.200 3.400 9.200 7.800 0 2.800-2.200 4.400-4.800 4.400-2 0-3.400-0.800-3.400-1.800 0-0.800 0.800-1 0.800-2.200 0-1.500-1.500-2.700-3.300-2.700-2.800 0-5.200 2.200-5.200 5.500 0 1.200 0.300 2.400 0.900 3.400C1.800 13.600 0.600 11.400 0.600 9 0.600 4.200 4.800 0.600 10 0.600z" fill="url(#eg)"/><path d="M3.300 11.600c0-3.300 2.400-5.500 5.200-5.500 1.800 0 3.300 1.200 3.300 2.700 0 1.200-0.800 1.400-0.800 2.200 0 1 1.400 1.800 3.400 1.800 1 0 2-0.200 2.800-0.700-1.600 3-4.600 5.100-8 5.100-3.400 0-5.900-2.400-5.900-5.600z" fill="#1565c0"/><path d="M3.300 11.600c0 3.200 2.500 5.600 5.900 5.600 0.600 0 1.200 0 1.800-0.200-3-0.600-5-3.200-5-6 0-2 1-3.600 2.500-4.900-2.800 0-5.200 2.200-5.200 5.500z" fill="#0f8fd8"/></svg>
<div class="abs" style="left:188px;top:576px;width:30px;height:2px;background:#f0d3bd;"></div>
<svg style="left:233px;top:554px" width="14" height="18" viewBox="0 0 14 18"><rect x="0.500" y="0.500" width="13" height="17" rx="1" fill="#5b6770" stroke="#3e464c" stroke-width="0.600"/><rect x="2" y="2" width="10" height="3.600" fill="#3fc1f0"/><g fill="#dfe5ea"><rect x="2" y="7" width="2.600" height="2.400"/><rect x="5.700" y="7" width="2.600" height="2.400"/><rect x="9.400" y="7" width="2.600" height="2.400"/><rect x="2" y="10.400" width="2.600" height="2.400"/><rect x="5.700" y="10.400" width="2.600" height="2.400"/><rect x="2" y="13.800" width="2.600" height="2.400"/><rect x="5.700" y="13.800" width="2.600" height="2.400"/></g><rect x="9.400" y="10.400" width="2.600" height="5.800" fill="#2f86d6"/></svg>
<svg style="left:268px;top:556.5px" width="18" height="13" viewBox="0 0 18 13"><rect x="0" y="0" width="18" height="13" rx="3.500" fill="#f00"/><path d="M7.200 3.600L12 6.500 7.200 9.400z" fill="#fff"/></svg>
<div class="abs" style="left:262px;top:576px;width:30px;height:2px;background:#f0d3bd;"></div>
<div class="abs" style="left:296px;top:548px;width:33.5px;height:30px;background:#2f2f2f;"></div>
<div class="abs" style="left:329.5px;top:548px;width:2.5px;height:30px;background:#1c1c1c;"></div>
<div class="abs" style="left:296px;top:576px;width:36px;height:2px;background:#f0d3bd;"></div>
<svg style="left:304.5px;top:554px" width="19" height="18" viewBox="0 0 19 18"><path d="M2 3.500L9 0.800l8.500 2v11L9.500 17.200 2 14.500z" fill="#c8201e"/><path d="M2 3.500L9.500 5.500l8-2.700M9.500 5.500v11.700" fill="none" stroke="#8e1412" stroke-width="0.700"/><path d="M2 3.500L9 0.800l8.500 2-8 2.700z" fill="#e04a40"/></svg>
<div class="t " style="left:306.5px;top:556.40px;font-size:9px;line-height:10.80px;color:#fff;font-weight:bold;">S</div>
<div class="t " style="left:312.5px;top:556.60px;font-size:9px;line-height:10.80px;color:#fff;font-weight:bold;letter-spacing:0.005px;">W</div>
<div class="t " style="left:311.5px;top:566.20px;font-size:5.5px;line-height:6.60px;color:#fff;font-weight:bold;letter-spacing:-0.184px;">2017</div>
<svg style="left:759px;top:556px" width="20" height="14" viewBox="0 0 20 14"><path d="M5 13.500C2.500 13.500 0.500 11.800 0.500 9.600c0-2 1.500-3.600 3.500-3.900C4.500 2.800 7 0.600 10 0.600c2.800 0 5.200 1.900 5.800 4.600 2.100 0.300 3.700 2 3.700 4.100 0 2.300-2 4.200-4.500 4.200z" fill="#c9dcf6"/><path d="M5 13.500C2.500 13.500 0.500 11.800 0.500 9.600c0-1 0.400-2 1.100-2.700 2 3 7 4.500 17.700 3.600-0.500 1.700-2.200 3-4.300 3z" fill="#9fc0ee"/></svg>
<div class="t " style="left:783px;top:556.70px;font-size:11px;line-height:13.20px;color:#fff;letter-spacing:-0.320px;">4°C</div>
<div class="t " style="left:806px;top:556.70px;font-size:11px;line-height:13.20px;color:#fff;letter-spacing:-0.290px;">Cloudy</div>
<svg style="left:857.5px;top:560px" width="10" height="6" viewBox="0 0 10 6"><path d="M1 5.200L5 1.200l4 4" fill="none" stroke="#fff" stroke-width="1.300"/></svg>
<svg style="left:875.5px;top:556.5px" width="10" height="14" viewBox="0 0 10 14"><rect x="1" y="3.600" width="6" height="6.400" rx="1" fill="none" stroke="#fff" stroke-width="1"/><path d="M7 5.800l2.500-1.300v5L7 8.200" fill="none" stroke="#fff" stroke-width="0.900"/><path d="M2 1.600c2-1.300 4-1.300 6 0M2 12.400c2 1.300 4 1.300 6 0" fill="none" stroke="#fff" stroke-width="0.900"/></svg>
<svg style="left:891.5px;top:558.5px" width="13" height="10" viewBox="0 0 13 10"><rect x="3" y="2.600" width="9" height="5.400" rx="0.600" fill="#fff"/><rect x="12" y="4" width="1" height="2.600" fill="#fff"/><path d="M0.500 2.200h3M2 0.600v3.200c0 1 0.600 1.400 1.400 1.400" fill="none" stroke="#fff" stroke-width="0.900"/></svg>
<svg style="left:911.5px;top:557.5px" width="12" height="12" viewBox="0 0 12 12"><path d="M1.500 11C1.500 5.500 5.500 1.500 11 1.500" fill="none" stroke="#9a9a9a" stroke-width="1"/><path d="M4.300 11c0-4 2.700-6.700 6.700-6.700" fill="none" stroke="#fff" stroke-width="1"/><path d="M7 11c0-2.300 1.700-4 4-4" fill="none" stroke="#fff" stroke-width="1"/><circle cx="10.200" cy="10.200" r="1.200" fill="#fff"/></svg>
<svg style="left:928px;top:557.5px" width="14" height="12" viewBox="0 0 14 12"><path d="M0.800 4.200h2.200L6 1.500v9L3 7.800H0.800z" fill="none" stroke="#fff" stroke-width="0.900"/><path d="M7.800 4c1 1.200 1 2.800 0 4M9.600 2.600c1.800 2 1.800 4.800 0 6.800M11.400 1.200c2.600 2.800 2.600 6.800 0 9.600" fill="none" stroke="#fff" stroke-width="0.900"/></svg>
<div class="t " style="left:949px;top:558.22px;font-size:8.8px;line-height:10.56px;color:#fff;letter-spacing:-0.362px;">УКР</div>
<div class="t " style="left:985px;top:550.42px;font-size:8.8px;line-height:10.56px;color:#fff;letter-spacing:-0.504px;">17:41</div>
<div class="t " style="left:975px;top:564.02px;font-size:8.8px;line-height:10.56px;color:#fff;letter-spacing:-0.304px;">02.12.2023</div>
<div class="abs" style="left:1019.5px;top:548px;width:1px;height:30px;background:#7a7a7a;"></div>

</body>
</html>
